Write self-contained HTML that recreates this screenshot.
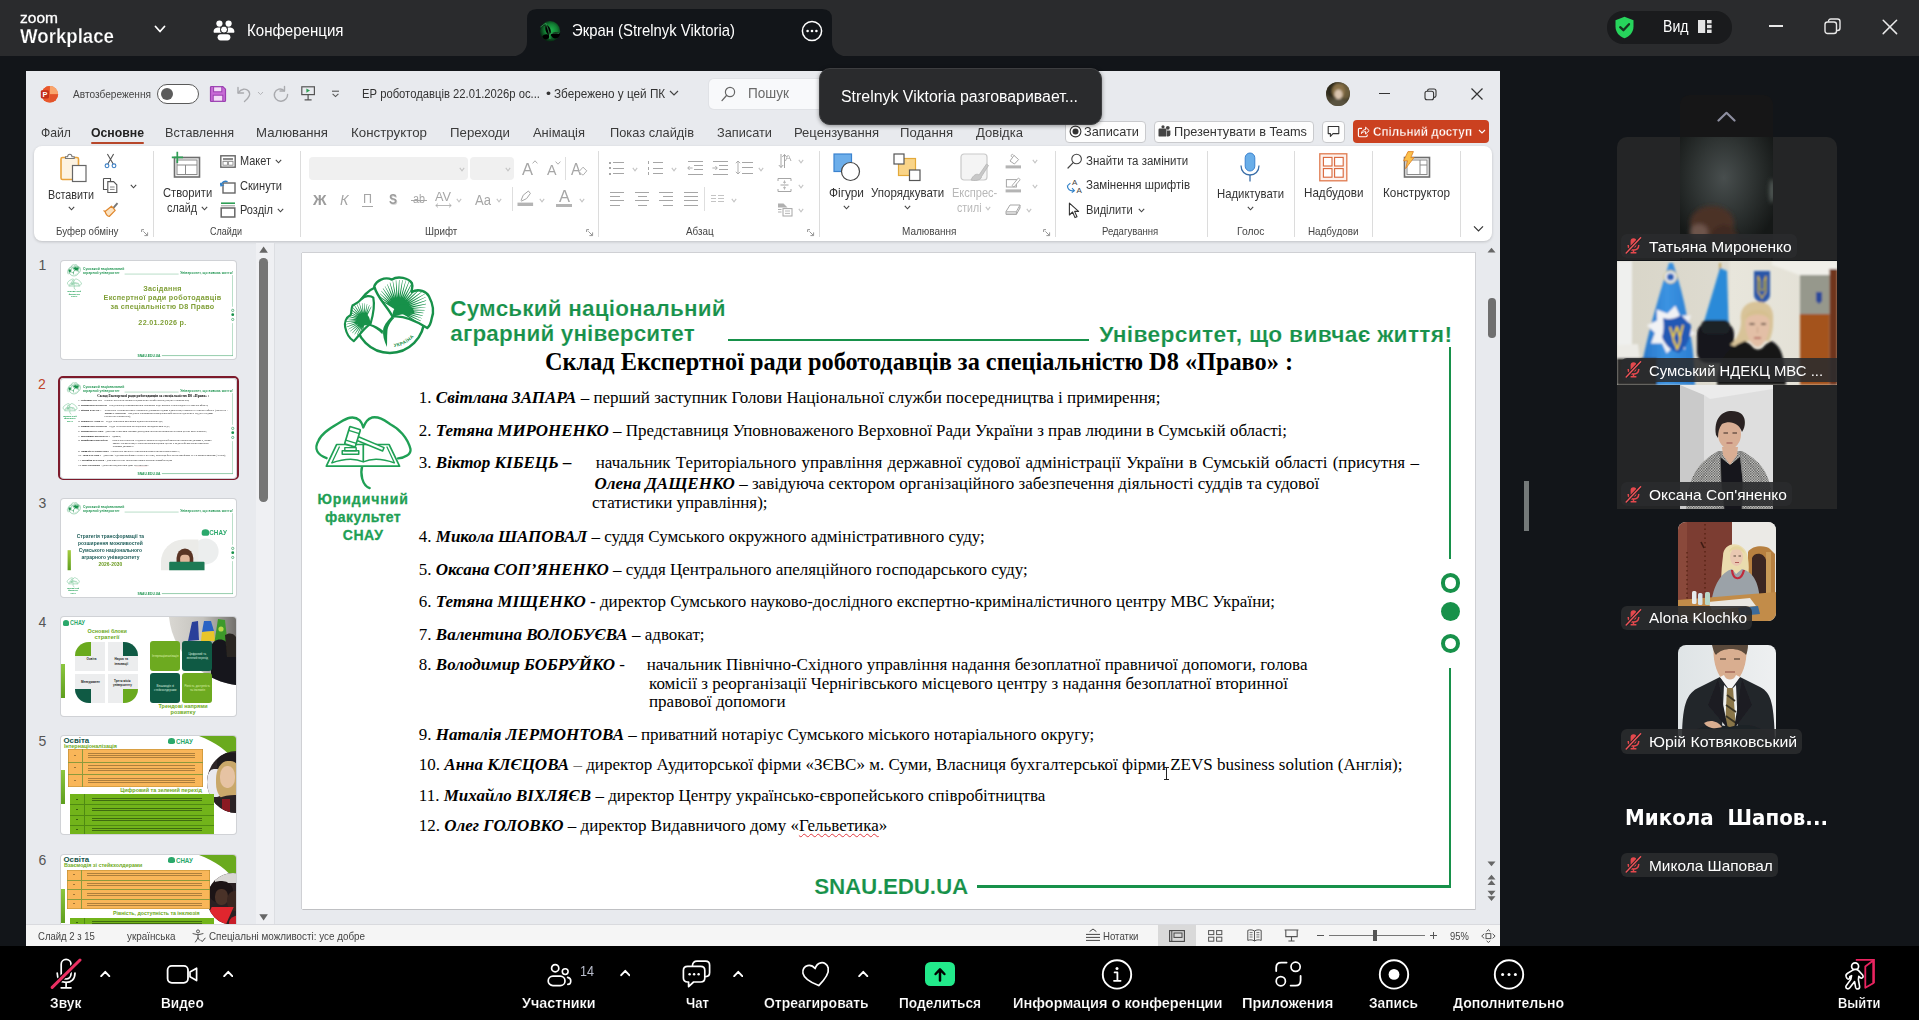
<!DOCTYPE html>
<html lang="uk">
<head>
<meta charset="utf-8">
<title>Zoom Workplace</title>
<style>
*{box-sizing:border-box}
html,body{margin:0;padding:0}
body{width:1919px;height:1020px;background:#121519;position:relative;overflow:hidden;font-family:"Liberation Sans",sans-serif;color:#fff}
.abs{position:absolute}
.t{position:absolute;white-space:pre;line-height:1}
/* slide text */
.row{position:absolute;white-space:pre;font:17px/20px "Liberation Serif",serif;color:#000;height:20px}
.row b{font-weight:bold;font-style:italic}
.g{color:#17914a}
.gh{position:absolute;white-space:pre;font-family:"Liberation Sans",sans-serif;color:#17914a;font-weight:bold;-webkit-text-stroke:0.15px #fff;line-height:1}
</style>
</head>
<body>
<!-- ===== zoom top bar ===== -->
<div class="abs" style="left:0px;top:0px;width:1919px;height:56px;background:#2a2b2d;"></div>
<svg class="abs" style="left:511px;top:0" width="340" height="57" viewBox="0 0 340 57"><path d="M0 57 C10 56 16 50 16 42 V19 Q16 9 26 9 H311 Q321 9 321 19 V42 C321 50 327 56 337 57 Z" fill="#121519"/></svg>
<div class="t" style="left:20.00px;top:8.68px;font:normal normal 14.5px/19px 'Liberation Sans',sans-serif;color:#fff;transform:scaleX(1.0714);transform-origin:0 0;-webkit-text-stroke:.3px #fff">zoom</div>
<div class="t" style="left:20.00px;top:22.54px;font:normal bold 19.8px/26px 'Liberation Sans',sans-serif;color:#fff;transform:scaleX(0.9429);transform-origin:0 0;-webkit-text-stroke:0.25px #2a2b2d">Workplace</div>
<svg class="abs" style="left:154px;top:25px;" width="12" height="9" viewBox="0 0 12 9" fill="none"><path d="M1.5 1.5 L6 6.5 L10.5 1.5" stroke="#fff" stroke-width="1.8" stroke-linecap="round" stroke-linejoin="round"/></svg>
<svg class="abs" style="left:213px;top:19px;" width="22" height="22" viewBox="0 0 22 22" fill="none"><g fill="#fff"><circle cx="6.400" cy="4.600" r="3.100"/><circle cx="15.600" cy="4.600" r="3.100"/><path d="M0.600 12.800 C0.600 9.600 3 8.400 5.600 8.400 C6.400 8.400 7 8.600 7.400 8.800 C6.600 10.400 7 12.600 8.400 13.800 H1.600 C1 13.800 0.600 13.400 0.600 12.800Z"/><path d="M21.400 12.800 C21.400 9.600 19 8.400 16.400 8.400 C15.600 8.400 15 8.600 14.600 8.800 C15.400 10.400 15 12.600 13.600 13.800 H20.400 C21 13.800 21.400 13.400 21.400 12.800Z"/><circle cx="11" cy="10.600" r="3.500" stroke="#2a2b2d" stroke-width="1"/><rect x="4.600" y="15.200" width="12.800" height="6.200" rx="3.100"/></g></svg>
<div class="t" style="left:247.00px;top:20.11px;font:normal normal 17px/22px 'Liberation Sans',sans-serif;color:#fff;transform:scaleX(0.8858);transform-origin:0 0;">Конференция</div>
<svg class="abs" style="left:539px;top:20px" width="22" height="22" viewBox="0 0 22 22"><defs><radialGradient id="tig" cx="55%" cy="45%" r="55%"><stop offset="0" stop-color="#1fb64c"/><stop offset=".55" stop-color="#138034"/><stop offset="1" stop-color="#072812"/></radialGradient><filter id="tib"><feGaussianBlur stdDeviation=".35"/></filter></defs><circle cx="11" cy="11.200" r="10.200" fill="url(#tig)"/><g filter="url(#tib)"><path d="M7 4.600 C12 7 13 12.400 10.400 15.600 C6.400 13.200 5.400 8.400 7 4.600Z" fill="#040604"/><path d="M11.600 14.800 C13.800 11.200 19.200 11.400 21.200 14.200 C19.600 19.600 13.400 20 11.600 14.800Z" fill="#040604"/><path d="M3.400 16.600 C4.800 13.400 9.200 13.600 10.600 16 C9.600 20.200 4.800 20.800 3.400 16.600Z" fill="#040604"/><path d="M1.200 6.800 L6.400 3.600 L5.400 5.800Z" fill="#0a1a0e"/><path d="M6.800 3.200 C8.600 8 10.600 12.600 11 19 M10.600 14.400 C13 13 16 12.600 20 13.400 M1.400 7 L6.600 3.400" stroke="#4be07a" stroke-width=".5" fill="none"/></g></svg>
<div class="t" style="left:572.00px;top:20.11px;font:normal normal 17px/22px 'Liberation Sans',sans-serif;color:#fff;transform:scaleX(0.8739);transform-origin:0 0;">Экран (Strelnyk Viktoria)</div>
<svg class="abs" style="left:801px;top:20px;" width="22" height="22" viewBox="0 0 22 22" fill="none"><circle cx="11" cy="11" r="9.6" stroke="#fff" stroke-width="1.5"/><circle cx="6.6" cy="11" r="1.3" fill="#fff"/><circle cx="11" cy="11" r="1.3" fill="#fff"/><circle cx="15.4" cy="11" r="1.3" fill="#fff"/></svg>
<div class="abs" style="left:1607px;top:11px;width:125px;height:33px;background:#1a1b1d;border-radius:16px"></div>
<svg class="abs" style="left:1614px;top:15.5px;" width="21" height="23" viewBox="0 0 21 23" fill="none"><path d="M10.5 0.8 L19.5 4.2 V10.5 C19.5 16.5 15.6 20.4 10.5 22.2 C5.4 20.4 1.5 16.5 1.5 10.5 V4.2Z" fill="#27d45c"/><path d="M6.2 11.2 L9.4 14.2 L15 8.2" stroke="#15331f" stroke-width="2.3" stroke-linecap="round" stroke-linejoin="round"/></svg>
<div class="t" style="left:1662.50px;top:16.16px;font:normal normal 16px/21px 'Liberation Sans',sans-serif;color:#fff;transform:scaleX(0.8807);transform-origin:0 0;">Вид</div>
<svg class="abs" style="left:1698px;top:20px;" width="14" height="13" viewBox="0 0 14 13" fill="none"><rect x="0" y="0" width="7.2" height="13" fill="#e4e4e4"/><rect x="9" y="0" width="4.6" height="3.4" fill="#e4e4e4"/><rect x="9" y="4.8" width="4.6" height="3.4" fill="#e4e4e4"/><rect x="9" y="9.6" width="4.6" height="3.4" fill="#e4e4e4"/></svg>
<div class="abs" style="left:1769px;top:25px;width:14px;height:1.6px;background:#e8e8e8;"></div>
<svg class="abs" style="left:1824px;top:17.5px;" width="17" height="17" viewBox="0 0 17 17" fill="none"><rect x="1" y="4" width="11.5" height="11.5" rx="2.5" stroke="#e8e8e8" stroke-width="1.4"/><path d="M4.5 3.8 V3.5 Q4.5 1 7 1 H13.5 Q16 1 16 3.5 V10 Q16 12.5 13.5 12.5 H12.8" stroke="#e8e8e8" stroke-width="1.4"/></svg>
<svg class="abs" style="left:1882px;top:18.5px;" width="16" height="16" viewBox="0 0 16 16" fill="none"><path d="M1.2 1.2 L14.6 14.6 M14.6 1.2 L1.2 14.6" stroke="#e8e8e8" stroke-width="1.5" stroke-linecap="round"/></svg>
<!-- ===== powerpoint window ===== -->
<div class="abs" style="left:26px;top:71px;width:1474px;height:875px;background:#e8eaee;"></div>
<svg class="abs" style="left:39.500px;top:85px" width="19" height="19" viewBox="0 0 19 19"><circle cx="9.800" cy="9.300" r="8.300" fill="#f2713a"/><path d="M9.800 1 A8.300 8.300 0 0 1 18.100 9.300 H9.800Z" fill="#f9a56c"/><path d="M9.800 17.600 A8.300 8.300 0 0 0 18.100 9.300 H9.800Z" fill="#e2532a"/><path d="M9.800 17.600 A8.300 8.300 0 0 1 1.500 9.300 A8.300 8.300 0 0 1 9.800 1Z" fill="#e8572c"/><rect x="0.800" y="5.200" width="8.200" height="8.200" rx="1.400" fill="#c42f1a"/><text x="4.900" y="11.900" font-family="Liberation Sans,sans-serif" font-weight="bold" font-size="7.400" fill="#fff" text-anchor="middle">P</text></svg>
<div class="t" style="left:73.00px;top:86.52px;font:normal normal 11.5px/15px 'Liberation Sans',sans-serif;color:#444;transform:scaleX(0.8803);transform-origin:0 0;">Автозбереження</div>
<div class="abs" style="left:157px;top:84px;width:42px;height:20px;background:#fff;border:1px solid #5a5a5a;border-radius:10px"></div>
<div class="abs" style="left:160.8px;top:87.6px;width:12.6px;height:12.6px;background:#5c5c5c;border-radius:50%"></div>
<svg class="abs" style="left:209px;top:85px;" width="18" height="18" viewBox="0 0 18 18" fill="none"><path d="M1.5 2.5 Q1.5 1.5 2.5 1.5 H13.8 L16.5 4.2 V15.5 Q16.5 16.5 15.5 16.5 H2.5 Q1.5 16.5 1.5 15.5Z" fill="#c86bd6" stroke="#9a3fb0" stroke-width="1.2"/><rect x="4.6" y="1.8" width="8.2" height="5" fill="#f3dcf7" stroke="#9a3fb0" stroke-width="1"/><rect x="4.2" y="10.2" width="9.6" height="6" fill="#f3dcf7" stroke="#9a3fb0" stroke-width="1"/></svg>
<svg class="abs" style="left:236px;top:85px;" width="16" height="18" viewBox="0 0 16 18" fill="none"><path d="M2 2.5 V8 H7.5" stroke="#a9aaae" stroke-width="1.4" stroke-linecap="round" stroke-linejoin="round"/><path d="M2.3 7.8 C5 3.5 10 3.2 12.5 6 C15 9 13 13 8.5 16.5" stroke="#a9aaae" stroke-width="1.4" stroke-linecap="round"/></svg>
<svg class="abs" style="left:257px;top:91px;" width="7" height="5" viewBox="0 0 7 5" fill="none"><path d="M1 1 L3.5 3.6 L6 1" stroke="#b5b6ba" stroke-width="1"/></svg>
<svg class="abs" style="left:272px;top:85px;" width="18" height="18" viewBox="0 0 18 18" fill="none"><path d="M12.5 1.5 V6 H8" stroke="#a9aaae" stroke-width="1.4" stroke-linecap="round" stroke-linejoin="round"/><path d="M12.3 5.8 C9 2.5 4 4 2.6 8 C1.3 12.5 5 16.5 9.2 16.2 C13 16 15.6 13 15.6 9.5" stroke="#a9aaae" stroke-width="1.4" stroke-linecap="round"/></svg>
<svg class="abs" style="left:300px;top:85px;" width="17" height="18" viewBox="0 0 17 18" fill="none"><rect x="1.800" y="1.800" width="12.600" height="7.800" stroke="#555" stroke-width="1.200"/><path d="M6.400 3.400 L10 5.600 L6.400 7.800Z" fill="#2f9e55"/><path d="M8.100 9.800 V14.600 M4.600 14.900 H11.600" stroke="#555" stroke-width="1.200"/></svg>
<svg class="abs" style="left:331px;top:90px;" width="9" height="8" viewBox="0 0 9 8" fill="none"><path d="M1 1.2 H8" stroke="#555" stroke-width="1.1"/><path d="M1.6 3.8 L4.5 6.6 L7.4 3.8" stroke="#555" stroke-width="1.1"/></svg>
<div class="t" style="left:362.00px;top:85.67px;font:normal normal 12.5px/16px 'Liberation Sans',sans-serif;color:#333;transform:scaleX(0.9003);transform-origin:0 0;">ЕР роботодавців 22.01.2026р ос...</div>
<div class="t" style="left:546.00px;top:85.67px;font:normal normal 12.5px/16px 'Liberation Sans',sans-serif;color:#333;transform:scaleX(1.1388);transform-origin:0 0;">•</div>
<div class="t" style="left:553.80px;top:85.67px;font:normal normal 12.5px/16px 'Liberation Sans',sans-serif;color:#333;transform:scaleX(0.9396);transform-origin:0 0;">Збережено у цей ПК</div>
<svg class="abs" style="left:669px;top:90px;" width="10" height="7" viewBox="0 0 10 7" fill="none"><path d="M1 1 L5 5 L9 1" stroke="#444" stroke-width="1.2"/></svg>
<div class="abs" style="left:709px;top:79px;width:380px;height:30px;background:#f8f9fb;border-radius:5px;box-shadow:0 0 0 1px #e0e2e6"></div>
<svg class="abs" style="left:721px;top:86px;" width="15" height="16" viewBox="0 0 15 16" fill="none"><circle cx="9" cy="6" r="4.6" stroke="#666" stroke-width="1.2"/><path d="M5.7 9.3 L1 14.6" stroke="#666" stroke-width="1.3" stroke-linecap="round"/></svg>
<div class="t" style="left:748.00px;top:84.15px;font:normal normal 14px/18px 'Liberation Sans',sans-serif;color:#6a6a6a;transform:scaleX(0.9711);transform-origin:0 0;">Пошук</div>
<svg class="abs" style="left:1326px;top:82px" width="24" height="24" viewBox="0 0 24 24"><defs><clipPath id="av"><circle cx="12" cy="12" r="12"/></clipPath><filter id="avb"><feGaussianBlur stdDeviation=".9"/></filter></defs><g clip-path="url(#av)"><rect width="24" height="24" fill="#4a4330"/><g filter="url(#avb)"><ellipse cx="6" cy="7" rx="7" ry="8" fill="#2e2a1c"/><ellipse cx="19" cy="8" rx="6" ry="9" fill="#6a5c3a"/><ellipse cx="12.500" cy="9" rx="6.500" ry="7.500" fill="#8a7248"/><ellipse cx="12.500" cy="12.500" rx="4" ry="5" fill="#d9c4ae"/><ellipse cx="12" cy="22" rx="9" ry="5" fill="#5a5240"/></g></g></svg>
<div class="abs" style="left:1379px;top:93px;width:11px;height:1.2px;background:#333;"></div>
<svg class="abs" style="left:1424px;top:88px;" width="13" height="13" viewBox="0 0 13 13" fill="none"><rect x="1" y="3.2" width="8.6" height="8.6" rx="2" stroke="#333" stroke-width="1.1"/><path d="M3.6 3 V2.8 Q3.6 1 5.4 1 H10 Q12 1 12 3 V7.6 Q12 9.4 10.2 9.4 H9.8" stroke="#333" stroke-width="1.1"/></svg>
<svg class="abs" style="left:1470px;top:87px;" width="14" height="14" viewBox="0 0 14 14" fill="none"><path d="M1.5 1.5 L12.5 12.5 M12.5 1.5 L1.5 12.5" stroke="#333" stroke-width="1.2"/></svg>
<div class="t" style="left:41.00px;top:123.92px;font:normal normal 13.5px/18px 'Liberation Sans',sans-serif;color:#3b3b3b;transform:scaleX(0.9035);transform-origin:0 0;">Файл</div>
<div class="t" style="left:165.00px;top:123.92px;font:normal normal 13.5px/18px 'Liberation Sans',sans-serif;color:#3b3b3b;transform:scaleX(0.9354);transform-origin:0 0;">Вставлення</div>
<div class="t" style="left:256.00px;top:123.92px;font:normal normal 13.5px/18px 'Liberation Sans',sans-serif;color:#3b3b3b;transform:scaleX(0.9773);transform-origin:0 0;">Малювання</div>
<div class="t" style="left:351.00px;top:123.92px;font:normal normal 13.5px/18px 'Liberation Sans',sans-serif;color:#3b3b3b;transform:scaleX(0.9872);transform-origin:0 0;">Конструктор</div>
<div class="t" style="left:450.00px;top:123.92px;font:normal normal 13.5px/18px 'Liberation Sans',sans-serif;color:#3b3b3b;transform:scaleX(0.9808);transform-origin:0 0;">Переходи</div>
<div class="t" style="left:533.00px;top:123.92px;font:normal normal 13.5px/18px 'Liberation Sans',sans-serif;color:#3b3b3b;transform:scaleX(0.9577);transform-origin:0 0;">Анімація</div>
<div class="t" style="left:610.00px;top:123.92px;font:normal normal 13.5px/18px 'Liberation Sans',sans-serif;color:#3b3b3b;transform:scaleX(0.9498);transform-origin:0 0;">Показ слайдів</div>
<div class="t" style="left:717.00px;top:123.92px;font:normal normal 13.5px/18px 'Liberation Sans',sans-serif;color:#3b3b3b;transform:scaleX(0.9450);transform-origin:0 0;">Записати</div>
<div class="t" style="left:794.00px;top:123.92px;font:normal normal 13.5px/18px 'Liberation Sans',sans-serif;color:#3b3b3b;transform:scaleX(0.9657);transform-origin:0 0;">Рецензування</div>
<div class="t" style="left:900.00px;top:123.92px;font:normal normal 13.5px/18px 'Liberation Sans',sans-serif;color:#3b3b3b;transform:scaleX(0.9719);transform-origin:0 0;">Подання</div>
<div class="t" style="left:976.00px;top:123.92px;font:normal normal 13.5px/18px 'Liberation Sans',sans-serif;color:#3b3b3b;transform:scaleX(0.9678);transform-origin:0 0;">Довідка</div>
<div class="t" style="left:91.00px;top:123.92px;font:normal bold 13.5px/18px 'Liberation Sans',sans-serif;color:#222;transform:scaleX(0.9079);transform-origin:0 0;">Основне</div>
<div class="abs" style="left:91px;top:141.5px;width:53px;height:2.6px;background:#b7472a;border-radius:1.3px"></div>
<div class="abs" style="left:1064.5px;top:120.5px;width:81px;height:22px;background:#fdfdfd;border:1px solid #c9cacd;border-radius:4px"></div>
<svg class="abs" style="left:1069px;top:125px;" width="13" height="13" viewBox="0 0 13 13" fill="none"><circle cx="6.5" cy="6.5" r="5.4" stroke="#333" stroke-width="1.1"/><circle cx="6.5" cy="6.5" r="3" fill="#333"/></svg>
<div class="t" style="left:1084.00px;top:122.82px;font:normal normal 13.5px/18px 'Liberation Sans',sans-serif;color:#333;transform:scaleX(0.9450);transform-origin:0 0;">Записати</div>
<div class="abs" style="left:1154px;top:120.5px;width:159.5px;height:22px;background:#fdfdfd;border:1px solid #c9cacd;border-radius:4px"></div>
<svg class="abs" style="left:1158px;top:125px;" width="13" height="13" viewBox="0 0 13 13" fill="none"><rect x="0.5" y="3.6" width="8" height="8" rx="1.2" fill="#444"/><circle cx="9.8" cy="2.8" r="1.9" fill="#444"/><path d="M9 5.6 H12.4 V9.6 Q12.4 11.6 10 11.6 H9Z" fill="#444"/><circle cx="5" cy="1.8" r="1.6" fill="#444"/></svg>
<div class="t" style="left:1174.00px;top:122.82px;font:normal normal 13.5px/18px 'Liberation Sans',sans-serif;color:#333;transform:scaleX(0.9439);transform-origin:0 0;">Презентувати в Teams</div>
<div class="abs" style="left:1322px;top:120.5px;width:23px;height:22px;background:#fdfdfd;border:1px solid #c9cacd;border-radius:4px"></div>
<svg class="abs" style="left:1327px;top:125px;" width="13" height="13" viewBox="0 0 13 13" fill="none"><path d="M1.2 1.5 H11.8 V8.6 H6 L3.4 11.4 V8.6 H1.2Z" stroke="#333" stroke-width="1.1" stroke-linejoin="round"/></svg>
<div class="abs" style="left:1353px;top:120px;width:135.5px;height:23px;background:#cb4120;border-radius:4px"></div>
<svg class="abs" style="left:1357px;top:125px;" width="13" height="13" viewBox="0 0 13 13" fill="none"><path d="M5 3.4 H2.6 Q1.4 3.4 1.4 4.6 V10.6 Q1.4 11.8 2.6 11.8 H9 Q10.2 11.8 10.2 10.6 V9.4" stroke="#fff" stroke-width="1.1"/><path d="M4.4 8.6 C4.6 6 6.4 4.6 8.6 4.6 V2.2 L12.2 5.6 L8.6 9 V6.6 C7 6.6 5.6 7 4.4 8.6Z" stroke="#fff" stroke-width="1" stroke-linejoin="round"/></svg>
<div class="t" style="left:1373.00px;top:123.32px;font:normal bold 13.5px/18px 'Liberation Sans',sans-serif;color:#fff;transform:scaleX(0.8700);transform-origin:0 0;-webkit-text-stroke:.3px #cb4120">Спільний доступ</div>
<svg class="abs" style="left:1478px;top:129px;" width="8" height="6" viewBox="0 0 8 6" fill="none"><path d="M1 1 L4 4 L7 1" stroke="#fff" stroke-width="1.1"/></svg>
<div class="abs" style="left:34px;top:146px;width:1458px;height:95px;background:#fff;border-radius:8px;box-shadow:0 1px 3px rgba(0,0,0,.18)"></div>
<div class="abs" style="left:152.5px;top:151px;width:1px;height:86px;background:#dcdcdc;"></div>
<div class="abs" style="left:300px;top:151px;width:1px;height:86px;background:#dcdcdc;"></div>
<div class="abs" style="left:597.6px;top:151px;width:1px;height:86px;background:#dcdcdc;"></div>
<div class="abs" style="left:818.8px;top:151px;width:1px;height:86px;background:#dcdcdc;"></div>
<div class="abs" style="left:1055px;top:151px;width:1px;height:86px;background:#dcdcdc;"></div>
<div class="abs" style="left:1207.2px;top:151px;width:1px;height:86px;background:#dcdcdc;"></div>
<div class="abs" style="left:1293.8px;top:151px;width:1px;height:86px;background:#dcdcdc;"></div>
<div class="abs" style="left:1372px;top:151px;width:1px;height:86px;background:#dcdcdc;"></div>
<div class="abs" style="left:1459.7px;top:151px;width:1px;height:86px;background:#dcdcdc;"></div>
<svg class="abs" style="left:59px;top:153px;" width="30" height="30" viewBox="0 0 30 30" fill="none"><rect x="2" y="4.5" width="17.5" height="22" rx="1.5" stroke="#e8a33d" stroke-width="1.6" fill="#fdf3e1"/><path d="M6.5 5.5 V3.8 H8.6 Q8.8 1.2 10.8 1.2 Q12.8 1.2 13 3.8 H15.2 V5.5Z" fill="#fff" stroke="#777" stroke-width="1.1"/><rect x="13.5" y="12.5" width="13.5" height="16" fill="#fff" stroke="#666" stroke-width="1.2"/></svg>
<div class="t" style="left:48.00px;top:185.60px;font:normal normal 13px/17px 'Liberation Sans',sans-serif;color:#333;transform:scaleX(0.8274);transform-origin:0 0;">Вставити</div>
<svg class="abs" style="left:67.5px;top:206px;" width="7" height="5" viewBox="0 0 7 5" fill="none"><path d="M0.8 0.8 L3.5 3.8 L6.2 0.8" stroke="#444" stroke-width="1.1"/></svg>
<svg class="abs" style="left:104px;top:153px;" width="13" height="16" viewBox="0 0 13 16" fill="none"><path d="M3.4 1 L9.2 11 M9.6 1 L3.8 11" stroke="#555" stroke-width="1.1"/><circle cx="3" cy="12.8" r="1.9" stroke="#3b7fc4" stroke-width="1.1"/><circle cx="10" cy="12.8" r="1.9" stroke="#3b7fc4" stroke-width="1.1"/></svg>
<svg class="abs" style="left:102px;top:177px;" width="17" height="17" viewBox="0 0 17 17" fill="none"><path d="M1.5 1.5 H8.5 V4.5 M1.5 1.5 V12.5 H5.5" stroke="#555" stroke-width="1.1"/><path d="M5.8 4.6 H11.6 L14.8 7.8 V15.5 H5.8Z" stroke="#555" stroke-width="1.1" fill="#fff"/><path d="M8 10 H12.6 M8 12.4 H12.6" stroke="#777" stroke-width="0.9"/></svg>
<svg class="abs" style="left:129.5px;top:184px;" width="7" height="5" viewBox="0 0 7 5" fill="none"><path d="M0.8 0.8 L3.5 3.8 L6.2 0.8" stroke="#444" stroke-width="1.1"/></svg>
<svg class="abs" style="left:102px;top:201px;" width="17" height="17" viewBox="0 0 17 17" fill="none"><path d="M10.5 6.5 L14.8 1.6 L16.2 2.8 L12 7.8Z" fill="#777"/><path d="M3 10.5 L9.5 5.2 L13.2 9.4 L7.2 15.5 Q4.5 15 3 10.5Z" fill="#fbe3c2" stroke="#e0872d" stroke-width="1.2" stroke-linejoin="round"/><path d="M1.5 9.6 L3 10.5" stroke="#e0872d" stroke-width="1.2"/></svg>
<div class="t" style="left:55.50px;top:223.89px;font:normal normal 11px/14px 'Liberation Sans',sans-serif;color:#444;transform:scaleX(0.8871);transform-origin:0 0;">Буфер обміну</div>
<svg class="abs" style="left:141px;top:229px;" width="8" height="8" viewBox="0 0 8 8" fill="none"><path d="M0.6 3 V0.6 H3 M2.4 2.4 L6.2 6.2 M6.6 3.4 V6.6 H3.4" stroke="#8a8a8a" stroke-width="0.9"/></svg>
<svg class="abs" style="left:171px;top:151px;" width="32" height="29" viewBox="0 0 32 29" fill="none"><rect x="3.5" y="6.5" width="25" height="19.5" stroke="#6e6e6e" stroke-width="1.6" fill="#f4f4f4"/><rect x="6" y="9" width="20" height="14.5" stroke="#8a8a8a" stroke-width="1" fill="#fff"/><path d="M6 14 H26 M14.5 14 V23.5" stroke="#8a8a8a" stroke-width="1"/><path d="M6.3 0.8 V12 M0.8 6.4 H12" stroke="#2f9e55" stroke-width="1.7"/></svg>
<div class="t" style="left:162.80px;top:184.00px;font:normal normal 13px/17px 'Liberation Sans',sans-serif;color:#333;transform:scaleX(0.8624);transform-origin:0 0;">Створити</div>
<div class="t" style="left:166.70px;top:198.80px;font:normal normal 13px/17px 'Liberation Sans',sans-serif;color:#333;transform:scaleX(0.8294);transform-origin:0 0;">слайд</div>
<svg class="abs" style="left:200.5px;top:205.5px;" width="7" height="5" viewBox="0 0 7 5" fill="none"><path d="M0.8 0.8 L3.5 3.8 L6.2 0.8" stroke="#444" stroke-width="1.1"/></svg>
<svg class="abs" style="left:220px;top:155px;" width="16" height="13" viewBox="0 0 16 13" fill="none"><rect x="0.8" y="0.8" width="14.4" height="11.4" stroke="#666" stroke-width="1.4" fill="#fff"/><rect x="3" y="3" width="10" height="2.2" fill="#8a8a8a"/><rect x="3" y="6.4" width="4.4" height="3.8" stroke="#8a8a8a" stroke-width="0.9"/><rect x="8.6" y="6.4" width="4.4" height="3.8" stroke="#8a8a8a" stroke-width="0.9"/></svg>
<div class="t" style="left:240.00px;top:152.00px;font:normal normal 13px/17px 'Liberation Sans',sans-serif;color:#333;transform:scaleX(0.8425);transform-origin:0 0;">Макет</div>
<svg class="abs" style="left:274.5px;top:158.5px;" width="7" height="5" viewBox="0 0 7 5" fill="none"><path d="M0.8 0.8 L3.5 3.8 L6.2 0.8" stroke="#444" stroke-width="1.1"/></svg>
<svg class="abs" style="left:220px;top:178.5px;" width="16" height="15" viewBox="0 0 16 15" fill="none"><rect x="3" y="4" width="12" height="10" stroke="#666" stroke-width="1.4" fill="#fff"/><path d="M1 6.5 C1.5 3 4.5 1.6 7.6 2.6" stroke="#2d7fc8" stroke-width="1.3"/><path d="M0.2 3.8 L1 7 L4 5.8" stroke="#2d7fc8" stroke-width="1.1" fill="none"/></svg>
<div class="t" style="left:240.00px;top:177.00px;font:normal normal 13px/17px 'Liberation Sans',sans-serif;color:#333;transform:scaleX(0.8531);transform-origin:0 0;">Скинути</div>
<svg class="abs" style="left:220px;top:202px;" width="16" height="16" viewBox="0 0 16 16" fill="none"><path d="M1 1.2 H15" stroke="#2f9e55" stroke-width="1.6"/><path d="M1 3.8 H15" stroke="#9a9a9a" stroke-width="1"/><rect x="1.2" y="6" width="13.6" height="9" stroke="#666" stroke-width="1.5" fill="#fff"/></svg>
<div class="t" style="left:240.00px;top:201.40px;font:normal normal 13px/17px 'Liberation Sans',sans-serif;color:#333;transform:scaleX(0.8479);transform-origin:0 0;">Розділ</div>
<svg class="abs" style="left:276.5px;top:208px;" width="7" height="5" viewBox="0 0 7 5" fill="none"><path d="M0.8 0.8 L3.5 3.8 L6.2 0.8" stroke="#444" stroke-width="1.1"/></svg>
<div class="t" style="left:210.00px;top:223.89px;font:normal normal 11px/14px 'Liberation Sans',sans-serif;color:#444;transform:scaleX(0.8166);transform-origin:0 0;">Слайди</div>
<div class="abs" style="left:308.5px;top:157px;width:159px;height:22.6px;background:#f0f0f0;border-radius:4px"></div>
<div class="abs" style="left:470.4px;top:157px;width:43.4px;height:22.6px;background:#f0f0f0;border-radius:4px"></div>
<svg class="abs" style="left:458.5px;top:166.5px;" width="6" height="5" viewBox="0 0 6 5" fill="none"><path d="M0.8 0.8 L3 3.8 L5.2 0.8" stroke="#c4c4c4" stroke-width="1.1"/></svg>
<svg class="abs" style="left:505px;top:166.5px;" width="6" height="5" viewBox="0 0 6 5" fill="none"><path d="M0.8 0.8 L3 3.8 L5.2 0.8" stroke="#c4c4c4" stroke-width="1.1"/></svg>
<div class="t" style="left:521.50px;top:159.11px;font:normal normal 17px/22px 'Liberation Sans',sans-serif;color:#a6a6a6;transform:scaleX(0.9697);transform-origin:0 0;">A</div>
<svg class="abs" style="left:531.5px;top:160px;" width="6" height="4" viewBox="0 0 6 4" fill="none"><path d="M0.6 3.4 L3 0.8 L5.4 3.4" stroke="#a6a6a6" stroke-width="0.9"/></svg>
<div class="t" style="left:546.50px;top:161.48px;font:normal normal 14.5px/19px 'Liberation Sans',sans-serif;color:#a6a6a6;transform:scaleX(0.9822);transform-origin:0 0;">A</div>
<svg class="abs" style="left:555px;top:160.5px;" width="6" height="4" viewBox="0 0 6 4" fill="none"><path d="M0.6 0.6 L3 3.2 L5.4 0.6" stroke="#a6a6a6" stroke-width="0.9"/></svg>
<div class="abs" style="left:565px;top:157px;width:1px;height:23px;background:#dedede;"></div>
<div class="t" style="left:571.00px;top:158.96px;font:normal normal 16px/21px 'Liberation Sans',sans-serif;color:#a6a6a6;transform:scaleX(0.9370);transform-origin:0 0;">A</div>
<svg class="abs" style="left:578px;top:166px;" width="10" height="10" viewBox="0 0 10 10" fill="none"><path d="M4.2 8.8 L1 5.6 L5 1.2 L8.8 4.8 L5.4 8.8Z" stroke="#a6a6a6" stroke-width="0.9" fill="#fff"/></svg>
<div class="t" style="left:313.00px;top:190.65px;font:normal bold 14px/18px 'Liberation Sans',sans-serif;color:#9c9c9c;transform:scaleX(1.0667);transform-origin:0 0;">Ж</div>
<div class="t" style="left:340.00px;top:190.65px;font:italic normal 14px/18px 'Liberation Sans',sans-serif;color:#a6a6a6;transform:scaleX(1.0284);transform-origin:0 0;">К</div>
<div class="t" style="left:362.50px;top:189.82px;font:normal normal 13.5px/18px 'Liberation Sans',sans-serif;color:#a6a6a6;transform:scaleX(0.9275);transform-origin:0 0;">П</div>
<div class="abs" style="left:362px;top:205.5px;width:10.5px;height:1px;background:#a6a6a6;"></div>
<div class="t" style="left:389.00px;top:189.98px;font:normal bold 14.5px/19px 'Liberation Sans',sans-serif;color:#9c9c9c;transform:scaleX(0.8271);transform-origin:0 0;text-shadow:1px 1px 0 #d8d8d8">S</div>
<div class="t" style="left:413.00px;top:191.17px;font:normal normal 12.5px/16px 'Liberation Sans',sans-serif;color:#a6a6a6;transform:scaleX(0.8629);transform-origin:0 0;">ab</div>
<div class="abs" style="left:410.5px;top:199.6px;width:16.5px;height:1px;background:#a6a6a6;"></div>
<div class="t" style="left:435.00px;top:188.67px;font:normal normal 12.5px/16px 'Liberation Sans',sans-serif;color:#a6a6a6;transform:scaleX(1.0159);transform-origin:0 0;">AV</div>
<svg class="abs" style="left:435px;top:202.5px;" width="17" height="5" viewBox="0 0 17 5" fill="none"><path d="M0.8 2.5 H16.2 M3 0.6 L0.8 2.5 L3 4.4 M14 0.6 L16.2 2.5 L14 4.4" stroke="#a6a6a6" stroke-width="0.8"/></svg>
<svg class="abs" style="left:456px;top:197.5px;" width="6" height="5" viewBox="0 0 6 5" fill="none"><path d="M0.8 0.8 L3 3.8 L5.2 0.8" stroke="#c4c4c4" stroke-width="1.1"/></svg>
<div class="t" style="left:475.00px;top:190.65px;font:normal normal 14px/18px 'Liberation Sans',sans-serif;color:#a6a6a6;transform:scaleX(0.9343);transform-origin:0 0;">Aa</div>
<svg class="abs" style="left:496px;top:197.5px;" width="6" height="5" viewBox="0 0 6 5" fill="none"><path d="M0.8 0.8 L3 3.8 L5.2 0.8" stroke="#c4c4c4" stroke-width="1.1"/></svg>
<div class="abs" style="left:511.6px;top:187px;width:1px;height:24px;background:#dedede;"></div>
<svg class="abs" style="left:517px;top:190px;" width="17" height="17" viewBox="0 0 17 17" fill="none"><path d="M4 10.5 L6.2 5.2 L11.4 1 L13.4 3.4 L9.6 8.6 L4.6 11Z" stroke="#a6a6a6" stroke-width="1" fill="#fff"/><rect x="0.5" y="12.6" width="15.6" height="3.4" fill="#b4b4b4"/></svg>
<svg class="abs" style="left:539px;top:197.5px;" width="6" height="5" viewBox="0 0 6 5" fill="none"><path d="M0.8 0.8 L3 3.8 L5.2 0.8" stroke="#c4c4c4" stroke-width="1.1"/></svg>
<div class="t" style="left:558.50px;top:186.46px;font:normal normal 16px/21px 'Liberation Sans',sans-serif;color:#a6a6a6;transform:scaleX(1.0307);transform-origin:0 0;">A</div>
<div class="abs" style="left:556px;top:203.6px;width:16px;height:3.2px;background:#b4b4b4;"></div>
<svg class="abs" style="left:579px;top:197.5px;" width="6" height="5" viewBox="0 0 6 5" fill="none"><path d="M0.8 0.8 L3 3.8 L5.2 0.8" stroke="#c4c4c4" stroke-width="1.1"/></svg>
<div class="t" style="left:424.70px;top:223.89px;font:normal normal 11px/14px 'Liberation Sans',sans-serif;color:#444;transform:scaleX(0.8922);transform-origin:0 0;">Шрифт</div>
<svg class="abs" style="left:586px;top:229px;" width="8" height="8" viewBox="0 0 8 8" fill="none"><path d="M0.6 3 V0.6 H3 M2.4 2.4 L6.2 6.2 M6.6 3.4 V6.6 H3.4" stroke="#8a8a8a" stroke-width="0.9"/></svg>
<div class="abs" style="left:609px;top:161.5px;width:2.2px;height:2.2px;background:#a6a6a6;"></div>
<div class="abs" style="left:613.4px;top:162px;width:10.6px;height:1.1px;background:#a6a6a6;"></div>
<div class="abs" style="left:609px;top:167.1px;width:2.2px;height:2.2px;background:#a6a6a6;"></div>
<div class="abs" style="left:613.4px;top:167.6px;width:10.6px;height:1.1px;background:#a6a6a6;"></div>
<div class="abs" style="left:609px;top:172.7px;width:2.2px;height:2.2px;background:#a6a6a6;"></div>
<div class="abs" style="left:613.4px;top:173.2px;width:10.6px;height:1.1px;background:#a6a6a6;"></div>
<svg class="abs" style="left:631.5px;top:166.5px;" width="6" height="5" viewBox="0 0 6 5" fill="none"><path d="M0.8 0.8 L3 3.8 L5.2 0.8" stroke="#c4c4c4" stroke-width="1.1"/></svg>
<div class="abs" style="left:652.5px;top:162px;width:10.6px;height:1.1px;background:#a6a6a6;"></div>
<div class="abs" style="left:648px;top:161px;width:1px;height:3px;background:#a6a6a6;"></div>
<div class="abs" style="left:652.5px;top:167.6px;width:10.6px;height:1.1px;background:#a6a6a6;"></div>
<div class="abs" style="left:648px;top:166.6px;width:1px;height:3px;background:#a6a6a6;"></div>
<div class="abs" style="left:652.5px;top:173.2px;width:10.6px;height:1.1px;background:#a6a6a6;"></div>
<div class="abs" style="left:648px;top:172.2px;width:1px;height:3px;background:#a6a6a6;"></div>
<svg class="abs" style="left:671px;top:166.5px;" width="6" height="5" viewBox="0 0 6 5" fill="none"><path d="M0.8 0.8 L3 3.8 L5.2 0.8" stroke="#c4c4c4" stroke-width="1.1"/></svg>
<div class="abs" style="left:688px;top:161px;width:14.5px;height:1.1px;background:#a6a6a6;"></div>
<div class="abs" style="left:694px;top:165.2px;width:8.5px;height:1.1px;background:#a6a6a6;"></div>
<div class="abs" style="left:694px;top:169.4px;width:8.5px;height:1.1px;background:#a6a6a6;"></div>
<div class="abs" style="left:688px;top:173.6px;width:14.5px;height:1.1px;background:#a6a6a6;"></div>
<svg class="abs" style="left:687px;top:164.5px;" width="6" height="6" viewBox="0 0 6 6" fill="none"><path d="M5.6 3 H0.8 M2.6 1 L0.8 3 L2.6 5" stroke="#a6a6a6" stroke-width="0.9"/></svg>
<div class="abs" style="left:713px;top:161px;width:14.5px;height:1.1px;background:#a6a6a6;"></div>
<div class="abs" style="left:719px;top:165.2px;width:8.5px;height:1.1px;background:#a6a6a6;"></div>
<div class="abs" style="left:719px;top:169.4px;width:8.5px;height:1.1px;background:#a6a6a6;"></div>
<div class="abs" style="left:713px;top:173.6px;width:14.5px;height:1.1px;background:#a6a6a6;"></div>
<svg class="abs" style="left:712px;top:164.5px;" width="6" height="6" viewBox="0 0 6 6" fill="none"><path d="M0.4 3 H5.2 M3.4 1 L5.2 3 L3.4 5" stroke="#a6a6a6" stroke-width="0.9"/></svg>
<div class="abs" style="left:742px;top:161.5px;width:10.5px;height:1.1px;background:#a6a6a6;"></div>
<div class="abs" style="left:742px;top:167px;width:10.5px;height:1.1px;background:#a6a6a6;"></div>
<div class="abs" style="left:742px;top:172.5px;width:10.5px;height:1.1px;background:#a6a6a6;"></div>
<svg class="abs" style="left:735px;top:160px;" width="6" height="15" viewBox="0 0 6 15" fill="none"><path d="M3 1 V14 M0.8 3.2 L3 1 L5.2 3.2 M0.8 11.8 L3 14 L5.2 11.8" stroke="#a6a6a6" stroke-width="0.9"/></svg>
<svg class="abs" style="left:758px;top:166.5px;" width="6" height="5" viewBox="0 0 6 5" fill="none"><path d="M0.8 0.8 L3 3.8 L5.2 0.8" stroke="#c4c4c4" stroke-width="1.1"/></svg>
<svg class="abs" style="left:778px;top:153px;" width="14" height="16" viewBox="0 0 14 16" fill="none"><path d="M3 1 V14.5 M0.8 12 L3 14.5 L5.2 12" stroke="#a6a6a6" stroke-width="1"/><path d="M11 15 V1.5 M8.8 4 L11 1.5 L13.2 4" stroke="#a6a6a6" stroke-width="1" transform="translate(-4.5 0)"/></svg>
<div class="t" style="left:785.00px;top:151.71px;font:normal normal 9.5px/12px 'Liberation Sans',sans-serif;color:#a6a6a6;transform:scaleX(1.0246);transform-origin:0 0;">A</div>
<svg class="abs" style="left:798px;top:158.5px;" width="6" height="5" viewBox="0 0 6 5" fill="none"><path d="M0.8 0.8 L3 3.8 L5.2 0.8" stroke="#c4c4c4" stroke-width="1.1"/></svg>
<svg class="abs" style="left:777px;top:177px;" width="15" height="16" viewBox="0 0 15 16" fill="none"><path d="M1 4 V1.5 H14 V4 M1 12 V14.5 H14 V12" stroke="#a6a6a6" stroke-width="1"/><path d="M3.5 8 H11.5" stroke="#a6a6a6" stroke-width="1"/><path d="M7.5 3.4 V6 M6 4.8 L7.5 6.2 L9 4.8 M7.5 12.6 V10 M6 11.2 L7.5 9.8 L9 11.2" stroke="#a6a6a6" stroke-width="0.8"/></svg>
<svg class="abs" style="left:798px;top:183.5px;" width="6" height="5" viewBox="0 0 6 5" fill="none"><path d="M0.8 0.8 L3 3.8 L5.2 0.8" stroke="#c4c4c4" stroke-width="1.1"/></svg>
<svg class="abs" style="left:777px;top:202px;" width="16" height="15" viewBox="0 0 16 15" fill="none"><path d="M1 1.5 H6.5 L10.5 5.5 H1Z" fill="#b0b0b0"/><rect x="6" y="6.6" width="9" height="7.4" stroke="#a6a6a6" stroke-width="1" fill="#fff"/><path d="M8 9 H13 M8 11.4 H13" stroke="#a6a6a6" stroke-width="0.8"/><path d="M1 7.5 H4.5 M1 10 H4.5" stroke="#a6a6a6" stroke-width="0.9"/></svg>
<svg class="abs" style="left:798px;top:208px;" width="6" height="5" viewBox="0 0 6 5" fill="none"><path d="M0.8 0.8 L3 3.8 L5.2 0.8" stroke="#c4c4c4" stroke-width="1.1"/></svg>
<div class="abs" style="left:610px;top:192px;width:14px;height:1.1px;background:#a6a6a6;"></div>
<div class="abs" style="left:610px;top:196.2px;width:10px;height:1.1px;background:#a6a6a6;"></div>
<div class="abs" style="left:610px;top:200.4px;width:14px;height:1.1px;background:#a6a6a6;"></div>
<div class="abs" style="left:610px;top:204.6px;width:10px;height:1.1px;background:#a6a6a6;"></div>
<div class="abs" style="left:635px;top:192px;width:14px;height:1.1px;background:#a6a6a6;"></div>
<div class="abs" style="left:637.5px;top:196.2px;width:9px;height:1.1px;background:#a6a6a6;"></div>
<div class="abs" style="left:635px;top:200.4px;width:14px;height:1.1px;background:#a6a6a6;"></div>
<div class="abs" style="left:637.5px;top:204.6px;width:9px;height:1.1px;background:#a6a6a6;"></div>
<div class="abs" style="left:659px;top:192px;width:14px;height:1.1px;background:#a6a6a6;"></div>
<div class="abs" style="left:663px;top:196.2px;width:10px;height:1.1px;background:#a6a6a6;"></div>
<div class="abs" style="left:659px;top:200.4px;width:14px;height:1.1px;background:#a6a6a6;"></div>
<div class="abs" style="left:663px;top:204.6px;width:10px;height:1.1px;background:#a6a6a6;"></div>
<div class="abs" style="left:684px;top:192px;width:14px;height:1.1px;background:#a6a6a6;"></div>
<div class="abs" style="left:684px;top:196.2px;width:14px;height:1.1px;background:#a6a6a6;"></div>
<div class="abs" style="left:684px;top:200.4px;width:14px;height:1.1px;background:#a6a6a6;"></div>
<div class="abs" style="left:684px;top:204.6px;width:14px;height:1.1px;background:#a6a6a6;"></div>
<div class="abs" style="left:704px;top:187px;width:1px;height:24px;background:#dedede;"></div>
<div class="abs" style="left:711px;top:195px;width:5.4px;height:1.1px;background:#c4c4c4;"></div>
<div class="abs" style="left:711px;top:198.2px;width:5.4px;height:1.1px;background:#c4c4c4;"></div>
<div class="abs" style="left:711px;top:201.4px;width:5.4px;height:1.1px;background:#c4c4c4;"></div>
<div class="abs" style="left:718.4px;top:195px;width:5.4px;height:1.1px;background:#c4c4c4;"></div>
<div class="abs" style="left:718.4px;top:198.2px;width:5.4px;height:1.1px;background:#c4c4c4;"></div>
<div class="abs" style="left:718.4px;top:201.4px;width:5.4px;height:1.1px;background:#c4c4c4;"></div>
<svg class="abs" style="left:731px;top:197.5px;" width="6" height="5" viewBox="0 0 6 5" fill="none"><path d="M0.8 0.8 L3 3.8 L5.2 0.8" stroke="#c4c4c4" stroke-width="1.1"/></svg>
<div class="t" style="left:686.40px;top:223.89px;font:normal normal 11px/14px 'Liberation Sans',sans-serif;color:#444;transform:scaleX(0.8944);transform-origin:0 0;">Абзац</div>
<svg class="abs" style="left:807px;top:229px;" width="8" height="8" viewBox="0 0 8 8" fill="none"><path d="M0.6 3 V0.6 H3 M2.4 2.4 L6.2 6.2 M6.6 3.4 V6.6 H3.4" stroke="#8a8a8a" stroke-width="0.9"/></svg>
<svg class="abs" style="left:833px;top:153px;" width="28" height="29" viewBox="0 0 28 29" fill="none"><rect x="1" y="1" width="17.5" height="17.5" fill="#6daeea" stroke="#3a82cf" stroke-width="1.2"/><circle cx="17.5" cy="18.5" r="9" fill="#fff" stroke="#444" stroke-width="1.2"/></svg>
<div class="t" style="left:829.00px;top:184.00px;font:normal normal 13px/17px 'Liberation Sans',sans-serif;color:#333;transform:scaleX(0.9124);transform-origin:0 0;">Фігури</div>
<svg class="abs" style="left:843px;top:205px;" width="7" height="5" viewBox="0 0 7 5" fill="none"><path d="M0.8 0.8 L3.5 3.8 L6.2 0.8" stroke="#444" stroke-width="1.1"/></svg>
<svg class="abs" style="left:893px;top:153px;" width="29" height="29" viewBox="0 0 29 29" fill="none"><rect x="5.5" y="5.5" width="17" height="17" fill="#f9d488" stroke="#e3a93a" stroke-width="1.2"/><rect x="1" y="1" width="10" height="10" fill="#fff" stroke="#555" stroke-width="1.2"/><rect x="16.5" y="17" width="10.5" height="10.5" fill="#fff" stroke="#555" stroke-width="1.2"/></svg>
<div class="t" style="left:870.70px;top:184.00px;font:normal normal 13px/17px 'Liberation Sans',sans-serif;color:#333;transform:scaleX(0.8840);transform-origin:0 0;">Упорядкувати</div>
<svg class="abs" style="left:903.5px;top:205px;" width="7" height="5" viewBox="0 0 7 5" fill="none"><path d="M0.8 0.8 L3.5 3.8 L6.2 0.8" stroke="#444" stroke-width="1.1"/></svg>
<svg class="abs" style="left:960px;top:153px;" width="30" height="30" viewBox="0 0 30 30" fill="none"><rect x="1" y="1" width="26" height="26" rx="3" fill="#f4f4f4" stroke="#c9c9c9" stroke-width="1.2"/><path d="M11 27 C13 22 17 20 19 22 L26.5 11 L28.5 12.5 L21.5 23.5 C22 26 17 28.6 11 27Z" fill="#c8c8c8" stroke="#b4b4b4" stroke-width="0.8"/></svg>
<div class="t" style="left:951.70px;top:184.00px;font:normal normal 13px/17px 'Liberation Sans',sans-serif;color:#b8b8b8;transform:scaleX(0.8492);transform-origin:0 0;">Експрес-</div>
<div class="t" style="left:957.00px;top:198.50px;font:normal normal 13px/17px 'Liberation Sans',sans-serif;color:#b8b8b8;transform:scaleX(0.8112);transform-origin:0 0;">стилі</div>
<svg class="abs" style="left:985px;top:205.5px;" width="6" height="5" viewBox="0 0 6 5" fill="none"><path d="M0.8 0.8 L3 3.8 L5.2 0.8" stroke="#c4c4c4" stroke-width="1.1"/></svg>
<svg class="abs" style="left:1005px;top:153px;" width="17" height="16" viewBox="0 0 17 16" fill="none"><path d="M5 8 L9 2.4 L13.6 6.6 L9.4 11Z" stroke="#a6a6a6" stroke-width="1" fill="#fff"/><path d="M9 2.6 C7 0 5.6 2 6.6 4" stroke="#a6a6a6" stroke-width="0.9"/><rect x="0.6" y="12.4" width="15.4" height="3" fill="#b4b4b4"/></svg>
<svg class="abs" style="left:1032px;top:158.5px;" width="6" height="5" viewBox="0 0 6 5" fill="none"><path d="M0.8 0.8 L3 3.8 L5.2 0.8" stroke="#c4c4c4" stroke-width="1.1"/></svg>
<svg class="abs" style="left:1005px;top:177px;" width="17" height="16" viewBox="0 0 17 16" fill="none"><rect x="1.4" y="2.6" width="10" height="7.4" stroke="#a6a6a6" stroke-width="1"/><path d="M7 8.6 L13.4 1 L15.2 2.6 L9 10Z" fill="#fff" stroke="#a6a6a6" stroke-width="0.9"/><rect x="0.6" y="12.4" width="15.4" height="3" fill="#b4b4b4"/></svg>
<svg class="abs" style="left:1032px;top:183.5px;" width="6" height="5" viewBox="0 0 6 5" fill="none"><path d="M0.8 0.8 L3 3.8 L5.2 0.8" stroke="#c4c4c4" stroke-width="1.1"/></svg>
<svg class="abs" style="left:1005px;top:202px;" width="18" height="15" viewBox="0 0 18 15" fill="none"><path d="M1 9.5 L5 3 H15 L11.4 9.5Z" fill="#fff" stroke="#a6a6a6" stroke-width="1"/><path d="M1 9.5 V12.4 H11.4 V9.5 M11.4 12.4 L15 6 V3" stroke="#a6a6a6" stroke-width="1" fill="#d9d9d9"/></svg>
<svg class="abs" style="left:1026px;top:208px;" width="6" height="5" viewBox="0 0 6 5" fill="none"><path d="M0.8 0.8 L3 3.8 L5.2 0.8" stroke="#c4c4c4" stroke-width="1.1"/></svg>
<div class="t" style="left:901.50px;top:223.89px;font:normal normal 11px/14px 'Liberation Sans',sans-serif;color:#444;transform:scaleX(0.9079);transform-origin:0 0;">Малювання</div>
<svg class="abs" style="left:1043px;top:229px;" width="8" height="8" viewBox="0 0 8 8" fill="none"><path d="M0.6 3 V0.6 H3 M2.4 2.4 L6.2 6.2 M6.6 3.4 V6.6 H3.4" stroke="#8a8a8a" stroke-width="0.9"/></svg>
<svg class="abs" style="left:1067px;top:153px;" width="16" height="16" viewBox="0 0 16 16" fill="none"><circle cx="9.6" cy="6" r="4.8" stroke="#444" stroke-width="1.1"/><path d="M6.2 9.6 L1 15" stroke="#444" stroke-width="1.2" stroke-linecap="round"/></svg>
<div class="t" style="left:1086.40px;top:152.87px;font:normal normal 12.5px/16px 'Liberation Sans',sans-serif;color:#333;transform:scaleX(0.9188);transform-origin:0 0;">Знайти та замінити</div>
<svg class="abs" style="left:1066px;top:177px;" width="18" height="17" viewBox="0 0 18 17" fill="none"><text x="6" y="8" font-family="Liberation Sans,sans-serif" font-size="8" fill="#444">A</text><text x="10.5" y="15.6" font-family="Liberation Sans,sans-serif" font-size="8" fill="#444">A</text><path d="M1.4 8.6 C1.4 12.4 4 14.4 8 13.6" stroke="#2d7fc8" stroke-width="1.2"/><path d="M6 11.2 L8.4 13.6 L5.8 15.6" stroke="#2d7fc8" stroke-width="1.1"/><path d="M4.4 6.2 L1.6 8.6" stroke="#2d7fc8" stroke-width="1.1"/></svg>
<div class="t" style="left:1086.40px;top:177.47px;font:normal normal 12.5px/16px 'Liberation Sans',sans-serif;color:#333;transform:scaleX(0.9212);transform-origin:0 0;">Замінення шрифтів</div>
<svg class="abs" style="left:1068px;top:202px;" width="12" height="17" viewBox="0 0 12 17" fill="none"><path d="M1.4 1.2 V13 L4.6 10 L7 15.6 L9 14.8 L6.6 9.4 H10.6Z" stroke="#333" stroke-width="1.1" fill="#fff" stroke-linejoin="round"/></svg>
<div class="t" style="left:1086.40px;top:201.67px;font:normal normal 12.5px/16px 'Liberation Sans',sans-serif;color:#333;transform:scaleX(0.8897);transform-origin:0 0;">Виділити</div>
<svg class="abs" style="left:1137.5px;top:208px;" width="7" height="5" viewBox="0 0 7 5" fill="none"><path d="M0.8 0.8 L3.5 3.8 L6.2 0.8" stroke="#444" stroke-width="1.1"/></svg>
<div class="t" style="left:1102.40px;top:223.89px;font:normal normal 11px/14px 'Liberation Sans',sans-serif;color:#444;transform:scaleX(0.8682);transform-origin:0 0;">Редагування</div>
<svg class="abs" style="left:1239px;top:152px;" width="22" height="31" viewBox="0 0 22 31" fill="none"><rect x="6.2" y="1" width="9.6" height="18" rx="4.8" fill="#69aee9" stroke="#3a82cf" stroke-width="1"/><path d="M2 13.5 C2 19.5 6 23 11 23 C16 23 20 19.5 20 13.5" stroke="#3a6ea8" stroke-width="1.3"/><path d="M11 23 V29.4" stroke="#3a6ea8" stroke-width="1.3"/></svg>
<div class="t" style="left:1217.00px;top:185.30px;font:normal normal 13px/17px 'Liberation Sans',sans-serif;color:#333;transform:scaleX(0.8721);transform-origin:0 0;">Надиктувати</div>
<svg class="abs" style="left:1246.5px;top:206px;" width="7" height="5" viewBox="0 0 7 5" fill="none"><path d="M0.8 0.8 L3.5 3.8 L6.2 0.8" stroke="#444" stroke-width="1.1"/></svg>
<div class="t" style="left:1236.50px;top:223.89px;font:normal normal 11px/14px 'Liberation Sans',sans-serif;color:#444;transform:scaleX(0.9397);transform-origin:0 0;">Голос</div>
<svg class="abs" style="left:1319px;top:153px;" width="29" height="29" viewBox="0 0 29 29" fill="none"><rect x="0.8" y="0.8" width="27" height="27" stroke="#e07a4f" stroke-width="1.3" fill="#fdf1ec"/><rect x="4.4" y="4.4" width="8.6" height="8.6" stroke="#d9663a" stroke-width="1.1" fill="#fff"/><rect x="15.6" y="4.4" width="8.6" height="8.6" stroke="#d9663a" stroke-width="1.1" fill="#fff"/><rect x="4.4" y="15.6" width="8.6" height="8.6" stroke="#d9663a" stroke-width="1.1" fill="#fff"/><rect x="15.6" y="15.6" width="8.6" height="8.6" stroke="#d9663a" stroke-width="1.1" fill="#fff"/></svg>
<div class="t" style="left:1304.00px;top:184.00px;font:normal normal 13px/17px 'Liberation Sans',sans-serif;color:#333;transform:scaleX(0.8943);transform-origin:0 0;">Надбудови</div>
<div class="t" style="left:1307.60px;top:223.89px;font:normal normal 11px/14px 'Liberation Sans',sans-serif;color:#444;transform:scaleX(0.8967);transform-origin:0 0;">Надбудови</div>
<svg class="abs" style="left:1400px;top:151px;" width="32" height="29" viewBox="0 0 32 29" fill="none"><rect x="4.5" y="6.5" width="25" height="19.5" stroke="#6e6e6e" stroke-width="1.6" fill="#f4f4f4"/><rect x="7" y="9" width="20" height="14.5" stroke="#8a8a8a" stroke-width="1" fill="#fff"/><path d="M20 9 V23.5 M20 14 H27" stroke="#8a8a8a" stroke-width="1"/><path d="M8 0.6 H13.4 L10.8 6.6 H14 L5.6 17.6 L7.6 9.8 H3.6Z" fill="#fbc04a" stroke="#e0872d" stroke-width="0.9" stroke-linejoin="round"/></svg>
<div class="t" style="left:1383.00px;top:184.00px;font:normal normal 13px/17px 'Liberation Sans',sans-serif;color:#333;transform:scaleX(0.9039);transform-origin:0 0;">Конструктор</div>
<svg class="abs" style="left:1473px;top:225px;" width="11" height="8" viewBox="0 0 11 8" fill="none"><path d="M1 1.4 L5.5 6 L10 1.4" stroke="#333" stroke-width="1.2"/></svg>
<!-- ===== slide ===== -->
<div class="abs" id="slide" style="left:303px;top:253px;width:1172px;height:656px;background:#fff;box-shadow:-1px 0 0 0 #fff,-2px 0 0 0 #cfd0d4,0 1px 0 0 #bfc0c3,0 0 0 1px #cfd0d4">
<svg class="abs" style="left:32px;top:17px" width="110" height="90" viewBox="0 0 1247 1020" fill="none"><circle cx="622" cy="550" r="390" stroke="#17914a" stroke-width="28" fill="none"/><path d="M652 528 C600 420 480 320 445 185 C470 120 560 72 645 108 C715 62 835 92 872 150 C888 190 862 228 870 250 C950 200 1040 250 1066 300 C1108 380 1128 470 1096 550 C1088 600 1068 640 1046 658 C940 590 800 510 652 528Z" fill="#fff" stroke="#17914a" stroke-width="27" stroke-linejoin="round"/><clipPath id="cpb"><path d="M652 528 C600 420 480 320 445 185 C470 120 560 72 645 108 C715 62 835 92 872 150 C888 190 862 228 870 250 C950 200 1040 250 1066 300 C1108 380 1128 470 1096 550 C1088 600 1068 640 1046 658 C940 590 800 510 652 528Z"/></clipPath><g clip-path="url(#cpb)"><path d="M700 432 L497 325 L494 329 L689 452ZM702 431 L502 295 L499 299 L689 449ZM705 430 L512 265 L509 269 L690 447ZM707 430 L526 236 L523 239 L691 444ZM710 429 L545 208 L541 211 L692 442ZM712 429 L568 183 L564 185 L693 440ZM715 429 L595 160 L590 162 L694 438ZM717 430 L625 141 L620 143 L696 436ZM719 430 L658 127 L653 127 L698 434ZM722 431 L694 117 L689 117 L700 433ZM724 433 L731 112 L726 112 L702 431ZM726 434 L768 114 L763 113 L704 431ZM728 436 L805 120 L801 119 L707 430ZM730 437 L841 132 L837 130 L709 429ZM731 439 L875 149 L870 147 L712 429ZM732 442 L905 171 L901 169 L714 429ZM733 444 L958 167 L954 164 L717 430ZM734 446 L984 199 L980 196 L719 430ZM735 449 L1004 235 L1001 231 L721 431ZM735 451 L1020 272 L1017 268 L724 432ZM735 454 L1029 310 L1027 306 L726 434ZM734 456 L1034 349 L1032 344 L728 435ZM734 459 L1033 387 L1031 382 L729 437ZM733 461 L1027 423 L1026 418 L731 439ZM732 463 L1016 458 L1016 453 L732 441ZM731 465 L1002 490 L1003 485 L733 443ZM729 467 L994 521 L995 516 L734 446ZM727 469 L985 551 L986 546 L735 448ZM725 471 L972 580 L974 576 L735 451ZM723 472 L957 608 L959 604 L735 453Z" fill="#17914a"/></g><path d="M655 530 C640 470 690 385 780 388 C850 392 905 440 900 500 C830 490 740 500 655 530Z" fill="#17914a"/><path d="M402 612 C430 520 452 400 434 312 C400 285 340 292 300 330 C270 368 230 385 200 400 C178 440 192 490 176 510 C122 540 106 600 116 650 C130 720 170 780 212 806 C262 760 330 652 402 612Z" fill="#fff" stroke="#17914a" stroke-width="25" stroke-linejoin="round"/><clipPath id="cps"><path d="M402 612 C430 520 452 400 434 312 C400 285 340 292 300 330 C270 368 230 385 200 400 C178 440 192 490 176 510 C122 540 106 600 116 650 C130 720 170 780 212 806 C262 760 330 652 402 612Z"/></clipPath><g clip-path="url(#cps)"><path d="M319 584 L304 743 L308 744 L337 586ZM317 582 L276 743 L280 744 L334 587ZM315 580 L248 738 L252 740 L332 587ZM314 577 L220 729 L224 731 L329 587ZM313 575 L194 714 L197 717 L326 587ZM313 572 L170 695 L172 698 L324 586ZM313 570 L149 672 L151 675 L321 585ZM313 567 L132 644 L133 648 L319 584ZM313 564 L120 614 L121 618 L317 582ZM314 562 L113 582 L113 586 L316 580ZM316 560 L112 549 L112 553 L314 578ZM318 558 L117 516 L116 520 L313 575ZM320 556 L127 485 L126 488 L313 573ZM322 555 L143 455 L141 459 L313 570ZM324 553 L164 429 L162 433 L313 567ZM327 553 L189 408 L186 410 L313 565ZM329 553 L217 391 L213 393 L314 562ZM332 553 L247 380 L243 381 L316 560ZM335 553 L278 373 L274 375 L317 558ZM337 554 L309 373 L305 373 L319 556ZM339 555 L338 377 L334 377 L322 555ZM342 557 L366 386 L362 386 L324 554ZM343 559 L392 400 L388 398 L326 553ZM345 561 L414 416 L410 415 L329 553Z" fill="#17914a"/></g><path d="M400 612 C400 560 385 505 335 488 C270 488 240 545 262 602 C300 640 360 632 400 612Z" fill="#17914a"/><path d="M588 874 C556 800 538 740 546 672 C560 612 610 560 648 522 L670 548 C632 584 596 640 594 700 C588 760 594 820 588 874Z" fill="#17914a"/><path d="M548 688 C502 650 450 626 398 612 L392 632 C440 648 492 680 536 728Z" fill="#17914a"/><path id="ukr" d="M668 872 A330 330 0 0 0 932 700" fill="none"/><text font-family="Liberation Sans,sans-serif" font-weight="bold" font-size="54" fill="#17914a" letter-spacing="5"><textPath href="#ukr">УКРАЇНА</textPath></text></svg>
<div class="gh" style="left:147.30px;top:45.35px;font-size:22.50px;letter-spacing:0.180px;">Сумський національний</div>
<div class="gh" style="left:147.30px;top:70.25px;font-size:22.50px;letter-spacing:0.120px;">аграрний університет</div>
<div class="gh" style="left:796.20px;top:69.70px;font-size:22.80px;letter-spacing:0.290px;">Університет, що вивчає життя!</div>
<div class="gh" style="left:511.20px;top:622.75px;font-size:22.50px;letter-spacing:-0.230px;">SNAU.EDU.UA</div>
<div class="abs" style="left:425px;top:86px;width:361px;height:2px;background:#17914a"></div>
<div class="abs" style="left:1145.8px;top:94px;width:2.4px;height:211.5px;background:#17914a"></div>
<div class="abs" style="left:1145.8px;top:415px;width:2.4px;height:219.5px;background:#17914a"></div>
<div class="abs" style="left:674px;top:632.2px;width:474.2px;height:2.4px;background:#17914a"></div>
<div class="abs" style="left:1137.6px;top:320.4px;width:19.4px;height:19.4px;border-radius:50%;border:4.9px solid #17914a;background:#fff"></div>
<div class="abs" style="left:1137.6px;top:348.7px;width:19.4px;height:19.4px;border-radius:50%;background:#17914a"></div>
<div class="abs" style="left:1137.6px;top:380.9px;width:19.4px;height:19.4px;border-radius:50%;border:4.9px solid #17914a;background:#fff"></div>
<div class="abs" style="left:0px;top:0px">
<svg class="abs" style="left:2px;top:152px" width="115" height="145" viewBox="0 0 809 1020" fill="none"><path d="M455 585 C400 565 388 480 402 432 M152 374 C92 352 58 312 95 250 C120 190 200 150 250 120 C290 95 340 68 385 108 C400 123 405 143 410 158 C418 135 430 100 470 88 C520 78 560 108 600 135 C660 165 722 230 742 310 C748 348 700 372 655 376" stroke="#1fa055" stroke-width="16.5" stroke-linecap="round" stroke-linejoin="round" fill="none"/><path d="M410 278 H222 L150 430 H665 L592 278 H410 V400" stroke="#1fa055" stroke-width="12" stroke-linejoin="round" fill="#fff"/><path d="M185 408 C270 378 350 372 410 400 C470 372 550 378 632 408" stroke="#1fa055" stroke-width="11" fill="none"/><path d="M243 292 L190 405 M575 292 L628 405" stroke="#1fa055" stroke-width="9"/><path d="M372 222 L556 300 L546 324 L362 248Z" fill="#fff" stroke="#1fa055" stroke-width="11" stroke-linejoin="round"/><g transform="rotate(17 335 222)"><rect x="296" y="160" width="78" height="128" rx="6" fill="#fff" stroke="#1fa055" stroke-width="12"/><path d="M296 188 H374 M296 260 H374" stroke="#1fa055" stroke-width="10"/></g><path d="M262 322 H378 V346 H262Z" fill="#fff" stroke="#1fa055" stroke-width="11" stroke-linejoin="round"/><path d="M280 300 H360 V322 H280Z" fill="#fff" stroke="#1fa055" stroke-width="10" stroke-linejoin="round"/></svg>
<div class="t" style="left:2.6px;top:237.7px;font:bold 14px/16px 'Liberation Sans',sans-serif;color:#1fa055;width:115px;text-align:center;-webkit-text-stroke:.3px #1fa055;letter-spacing:0.95px">Юридичний</div>
<div class="t" style="left:2.6px;top:255.8px;font:bold 14px/16px 'Liberation Sans',sans-serif;color:#1fa055;width:115px;text-align:center;-webkit-text-stroke:.3px #1fa055;letter-spacing:0.42px">факультет</div>
<div class="t" style="left:2.6px;top:274.2px;font:bold 14px/16px 'Liberation Sans',sans-serif;color:#1fa055;width:115px;text-align:center;-webkit-text-stroke:.3px #1fa055;letter-spacing:0.50px">СНАУ</div>
</div>
<div class="t" style="left:242.00px;top:95.30px;font:bold 24.30px/28px 'Liberation Serif',serif;color:#000">Склад Експертної ради роботодавців за спеціальністю D8 «Право» :</div>
<div class="row" style="left:115.80px;top:134.76px;">1. <b>Світлана ЗАПАРА</b> – перший заступник Голови Національної служби посередництва і примирення;</div>
<div class="row" style="left:115.80px;top:168.26px;">2. <b>Тетяна МИРОНЕНКО</b> – Представниця Уповноваженого Верховної Ради України з прав людини в Сумській області;</div>
<div class="row" style="left:115.80px;top:200.26px;">3. <b>Віктор КІБЕЦЬ –</b></div>
<div class="row" style="left:292.70px;top:200.26px;word-spacing:1.03px">начальник Територіального управління державної судової адміністрації України в Сумській області (присутня –</div>
<div class="row" style="left:291.50px;top:220.96px;"><b>Олена ДАЩЕНКО</b> – завідуюча сектором організаційного забезпечення діяльності суддів та судової</div>
<div class="row" style="left:289.00px;top:240.26px;">статистики управління);</div>
<div class="row" style="left:115.80px;top:274.26px;">4. <b>Микола ШАПОВАЛ</b> – суддя Сумського окружного адміністративного суду;</div>
<div class="row" style="left:115.80px;top:306.76px;">5. <b>Оксана СОП’ЯНЕНКО</b> – суддя Центрального апеляційного господарського суду;</div>
<div class="row" style="left:115.80px;top:339.26px;">6. <b>Тетяна МІЩЕНКО</b> - директор Сумського науково-дослідного експертно-криміналістичного центру МВС України;</div>
<div class="row" style="left:115.80px;top:371.76px;">7. <b>Валентина ВОЛОБУЄВА</b> – адвокат;</div>
<div class="row" style="left:115.80px;top:402.26px;">8. <b>Володимир БОБРУЙКО</b> -</div>
<div class="row" style="left:343.75px;top:402.26px;">начальник Північно-Східного управління надання безоплатної правничої допомоги, голова</div>
<div class="row" style="left:346.00px;top:421.01px;">комісії з реорганізації Чернігівського місцевого центру з надання безоплатної вторинної</div>
<div class="row" style="left:346.00px;top:439.26px;">правової допомоги</div>
<div class="row" style="left:115.80px;top:471.76px;">9. <b>Наталія ЛЕРМОНТОВА</b> – приватний нотаріус Сумського міського нотаріального округу;</div>
<div class="row" style="left:115.80px;top:501.76px;">10. <b>Анна КЛЄЦОВА</b><span style="color:#777"> –</span> директор Аудиторської фірми «ЗЄВС» м. Суми, Власниця бухгалтерської фірми ZEVS business solution (Англія);</div>
<div class="row" style="left:115.80px;top:532.76px;">11. <b>Михайло ВІХЛЯЄВ</b> – директор Центру українсько-європейського співробітництва</div>
<div class="row" style="left:115.80px;top:562.76px;">12. <b>Олег ГОЛОВКО</b> – директор Видавничого дому «<span style="text-decoration:underline wavy #e0383e 0.8px;text-underline-offset:2px">Гельветика</span>»</div>
<div class="abs" style="left:862.5px;top:514px;width:1px;height:12px;background:#222"></div><div class="abs" style="left:860.5px;top:514px;width:5px;height:1px;background:#222"></div><div class="abs" style="left:860.5px;top:526px;width:5px;height:1px;background:#222"></div>
</div>
<div class="abs" style="left:60.6px;top:260.8px;width:175.4px;height:98.4px;background:#fff;border-radius:3px;overflow:hidden;box-shadow:0 0 0 1px #d0d2d6"><div class="abs" style="left:0;top:0;width:1172px;height:656px;transform:scale(0.14966);transform-origin:0 0"><svg class="abs" style="left:32px;top:17px" width="110" height="90" viewBox="0 0 1247 1020" fill="none"><circle cx="622" cy="550" r="390" stroke="#17914a" stroke-width="28" fill="none"/><path d="M652 528 C600 420 480 320 445 185 C470 120 560 72 645 108 C715 62 835 92 872 150 C888 190 862 228 870 250 C950 200 1040 250 1066 300 C1108 380 1128 470 1096 550 C1088 600 1068 640 1046 658 C940 590 800 510 652 528Z" fill="#fff" stroke="#17914a" stroke-width="27" stroke-linejoin="round"/><clipPath id="cpb1"><path d="M652 528 C600 420 480 320 445 185 C470 120 560 72 645 108 C715 62 835 92 872 150 C888 190 862 228 870 250 C950 200 1040 250 1066 300 C1108 380 1128 470 1096 550 C1088 600 1068 640 1046 658 C940 590 800 510 652 528Z"/></clipPath><g clip-path="url(#cpb1)"><path d="M700 432 L497 325 L494 329 L689 452ZM702 431 L502 295 L499 299 L689 449ZM705 430 L512 265 L509 269 L690 447ZM707 430 L526 236 L523 239 L691 444ZM710 429 L545 208 L541 211 L692 442ZM712 429 L568 183 L564 185 L693 440ZM715 429 L595 160 L590 162 L694 438ZM717 430 L625 141 L620 143 L696 436ZM719 430 L658 127 L653 127 L698 434ZM722 431 L694 117 L689 117 L700 433ZM724 433 L731 112 L726 112 L702 431ZM726 434 L768 114 L763 113 L704 431ZM728 436 L805 120 L801 119 L707 430ZM730 437 L841 132 L837 130 L709 429ZM731 439 L875 149 L870 147 L712 429ZM732 442 L905 171 L901 169 L714 429ZM733 444 L958 167 L954 164 L717 430ZM734 446 L984 199 L980 196 L719 430ZM735 449 L1004 235 L1001 231 L721 431ZM735 451 L1020 272 L1017 268 L724 432ZM735 454 L1029 310 L1027 306 L726 434ZM734 456 L1034 349 L1032 344 L728 435ZM734 459 L1033 387 L1031 382 L729 437ZM733 461 L1027 423 L1026 418 L731 439ZM732 463 L1016 458 L1016 453 L732 441ZM731 465 L1002 490 L1003 485 L733 443ZM729 467 L994 521 L995 516 L734 446ZM727 469 L985 551 L986 546 L735 448ZM725 471 L972 580 L974 576 L735 451ZM723 472 L957 608 L959 604 L735 453Z" fill="#17914a"/></g><path d="M655 530 C640 470 690 385 780 388 C850 392 905 440 900 500 C830 490 740 500 655 530Z" fill="#17914a"/><path d="M402 612 C430 520 452 400 434 312 C400 285 340 292 300 330 C270 368 230 385 200 400 C178 440 192 490 176 510 C122 540 106 600 116 650 C130 720 170 780 212 806 C262 760 330 652 402 612Z" fill="#fff" stroke="#17914a" stroke-width="25" stroke-linejoin="round"/><clipPath id="cps1"><path d="M402 612 C430 520 452 400 434 312 C400 285 340 292 300 330 C270 368 230 385 200 400 C178 440 192 490 176 510 C122 540 106 600 116 650 C130 720 170 780 212 806 C262 760 330 652 402 612Z"/></clipPath><g clip-path="url(#cps1)"><path d="M319 584 L304 743 L308 744 L337 586ZM317 582 L276 743 L280 744 L334 587ZM315 580 L248 738 L252 740 L332 587ZM314 577 L220 729 L224 731 L329 587ZM313 575 L194 714 L197 717 L326 587ZM313 572 L170 695 L172 698 L324 586ZM313 570 L149 672 L151 675 L321 585ZM313 567 L132 644 L133 648 L319 584ZM313 564 L120 614 L121 618 L317 582ZM314 562 L113 582 L113 586 L316 580ZM316 560 L112 549 L112 553 L314 578ZM318 558 L117 516 L116 520 L313 575ZM320 556 L127 485 L126 488 L313 573ZM322 555 L143 455 L141 459 L313 570ZM324 553 L164 429 L162 433 L313 567ZM327 553 L189 408 L186 410 L313 565ZM329 553 L217 391 L213 393 L314 562ZM332 553 L247 380 L243 381 L316 560ZM335 553 L278 373 L274 375 L317 558ZM337 554 L309 373 L305 373 L319 556ZM339 555 L338 377 L334 377 L322 555ZM342 557 L366 386 L362 386 L324 554ZM343 559 L392 400 L388 398 L326 553ZM345 561 L414 416 L410 415 L329 553Z" fill="#17914a"/></g><path d="M400 612 C400 560 385 505 335 488 C270 488 240 545 262 602 C300 640 360 632 400 612Z" fill="#17914a"/><path d="M588 874 C556 800 538 740 546 672 C560 612 610 560 648 522 L670 548 C632 584 596 640 594 700 C588 760 594 820 588 874Z" fill="#17914a"/><path d="M548 688 C502 650 450 626 398 612 L392 632 C440 648 492 680 536 728Z" fill="#17914a"/><path id="ukr1" d="M668 872 A330 330 0 0 0 932 700" fill="none"/><text font-family="Liberation Sans,sans-serif" font-weight="bold" font-size="54" fill="#17914a" letter-spacing="5"><textPath href="#ukr1">УКРАЇНА</textPath></text></svg><div class="gh" style="left:147.30px;top:45.35px;font-size:22.50px;letter-spacing:0.180px;">Сумський національний</div><div class="gh" style="left:147.30px;top:70.25px;font-size:22.50px;letter-spacing:0.120px;">аграрний університет</div><div class="gh" style="left:796.20px;top:69.70px;font-size:22.80px;letter-spacing:0.290px;">Університет, що вивчає життя!</div><div class="gh" style="left:511.20px;top:622.75px;font-size:22.50px;letter-spacing:-0.230px;">SNAU.EDU.UA</div><div class="abs" style="left:425px;top:86px;width:361px;height:2px;background:#17914a"></div><div class="abs" style="left:1145.8px;top:94px;width:2.4px;height:211.5px;background:#17914a"></div><div class="abs" style="left:1145.8px;top:415px;width:2.4px;height:219.5px;background:#17914a"></div><div class="abs" style="left:674px;top:632.2px;width:474.2px;height:2.4px;background:#17914a"></div><div class="abs" style="left:1137.6px;top:320.4px;width:19.4px;height:19.4px;border-radius:50%;border:4.9px solid #17914a;background:#fff"></div><div class="abs" style="left:1137.6px;top:348.7px;width:19.4px;height:19.4px;border-radius:50%;background:#17914a"></div><div class="abs" style="left:1137.6px;top:380.9px;width:19.4px;height:19.4px;border-radius:50%;border:4.9px solid #17914a;background:#fff"></div><div class="abs" style="left:0;top:0;transform:translate(29px,-44px);transform-origin:0 0"><div class="abs" style="left:0px;top:0px"><svg class="abs" style="left:2px;top:152px" width="115" height="145" viewBox="0 0 809 1020" fill="none"><path d="M455 585 C400 565 388 480 402 432 M152 374 C92 352 58 312 95 250 C120 190 200 150 250 120 C290 95 340 68 385 108 C400 123 405 143 410 158 C418 135 430 100 470 88 C520 78 560 108 600 135 C660 165 722 230 742 310 C748 348 700 372 655 376" stroke="#1fa055" stroke-width="16.5" stroke-linecap="round" stroke-linejoin="round" fill="none"/><path d="M410 278 H222 L150 430 H665 L592 278 H410 V400" stroke="#1fa055" stroke-width="12" stroke-linejoin="round" fill="#fff"/><path d="M185 408 C270 378 350 372 410 400 C470 372 550 378 632 408" stroke="#1fa055" stroke-width="11" fill="none"/><path d="M243 292 L190 405 M575 292 L628 405" stroke="#1fa055" stroke-width="9"/><path d="M372 222 L556 300 L546 324 L362 248Z" fill="#fff" stroke="#1fa055" stroke-width="11" stroke-linejoin="round"/><g transform="rotate(17 335 222)"><rect x="296" y="160" width="78" height="128" rx="6" fill="#fff" stroke="#1fa055" stroke-width="12"/><path d="M296 188 H374 M296 260 H374" stroke="#1fa055" stroke-width="10"/></g><path d="M262 322 H378 V346 H262Z" fill="#fff" stroke="#1fa055" stroke-width="11" stroke-linejoin="round"/><path d="M280 300 H360 V322 H280Z" fill="#fff" stroke="#1fa055" stroke-width="10" stroke-linejoin="round"/></svg><div class="t" style="left:2.6px;top:237.7px;font:bold 14px/16px 'Liberation Sans',sans-serif;color:#1fa055;width:115px;text-align:center;-webkit-text-stroke:.3px #1fa055;letter-spacing:0.95px">Юридичний</div><div class="t" style="left:2.6px;top:255.8px;font:bold 14px/16px 'Liberation Sans',sans-serif;color:#1fa055;width:115px;text-align:center;-webkit-text-stroke:.3px #1fa055;letter-spacing:0.42px">факультет</div><div class="t" style="left:2.6px;top:274.2px;font:bold 14px/16px 'Liberation Sans',sans-serif;color:#1fa055;width:115px;text-align:center;-webkit-text-stroke:.3px #1fa055;letter-spacing:0.50px">СНАУ</div></div></div><div class="t" style="left:178px;top:161px;width:1000px;text-align:center;font:bold 48px/52px 'Liberation Sans',sans-serif;letter-spacing:2px;color:#7f9f36">Засідання</div><div class="t" style="left:178px;top:221px;width:1000px;text-align:center;font:bold 48px/52px 'Liberation Sans',sans-serif;letter-spacing:2px;color:#7f9f36">Експертної ради роботодавців</div><div class="t" style="left:178px;top:276px;width:1000px;text-align:center;font:bold 48px/52px 'Liberation Sans',sans-serif;letter-spacing:2px;color:#7f9f36">за спеціальністю D8 Право</div><div class="t" style="left:178px;top:385px;width:1000px;text-align:center;font:bold 48px/52px 'Liberation Sans',sans-serif;letter-spacing:2px;color:#7f9f36">22.01.2026 р.</div></div></div>
<div class="abs" style="left:57.6px;top:376.4px;width:181.6px;height:104px;border:2.4px solid #7d1a2b;border-radius:5px;background:#fff"></div>
<div class="abs" style="left:60.8px;top:379.4px;width:175.4px;height:98.4px;background:#fff;border-radius:3px;overflow:hidden;box-shadow:0 0 0 1px #d0d2d6"><div class="abs" style="left:0;top:0;width:1172px;height:656px;transform:scale(0.14966);transform-origin:0 0"><svg class="abs" style="left:32px;top:17px" width="110" height="90" viewBox="0 0 1247 1020" fill="none"><circle cx="622" cy="550" r="390" stroke="#17914a" stroke-width="28" fill="none"/><path d="M652 528 C600 420 480 320 445 185 C470 120 560 72 645 108 C715 62 835 92 872 150 C888 190 862 228 870 250 C950 200 1040 250 1066 300 C1108 380 1128 470 1096 550 C1088 600 1068 640 1046 658 C940 590 800 510 652 528Z" fill="#fff" stroke="#17914a" stroke-width="27" stroke-linejoin="round"/><clipPath id="cpb2"><path d="M652 528 C600 420 480 320 445 185 C470 120 560 72 645 108 C715 62 835 92 872 150 C888 190 862 228 870 250 C950 200 1040 250 1066 300 C1108 380 1128 470 1096 550 C1088 600 1068 640 1046 658 C940 590 800 510 652 528Z"/></clipPath><g clip-path="url(#cpb2)"><path d="M700 432 L497 325 L494 329 L689 452ZM702 431 L502 295 L499 299 L689 449ZM705 430 L512 265 L509 269 L690 447ZM707 430 L526 236 L523 239 L691 444ZM710 429 L545 208 L541 211 L692 442ZM712 429 L568 183 L564 185 L693 440ZM715 429 L595 160 L590 162 L694 438ZM717 430 L625 141 L620 143 L696 436ZM719 430 L658 127 L653 127 L698 434ZM722 431 L694 117 L689 117 L700 433ZM724 433 L731 112 L726 112 L702 431ZM726 434 L768 114 L763 113 L704 431ZM728 436 L805 120 L801 119 L707 430ZM730 437 L841 132 L837 130 L709 429ZM731 439 L875 149 L870 147 L712 429ZM732 442 L905 171 L901 169 L714 429ZM733 444 L958 167 L954 164 L717 430ZM734 446 L984 199 L980 196 L719 430ZM735 449 L1004 235 L1001 231 L721 431ZM735 451 L1020 272 L1017 268 L724 432ZM735 454 L1029 310 L1027 306 L726 434ZM734 456 L1034 349 L1032 344 L728 435ZM734 459 L1033 387 L1031 382 L729 437ZM733 461 L1027 423 L1026 418 L731 439ZM732 463 L1016 458 L1016 453 L732 441ZM731 465 L1002 490 L1003 485 L733 443ZM729 467 L994 521 L995 516 L734 446ZM727 469 L985 551 L986 546 L735 448ZM725 471 L972 580 L974 576 L735 451ZM723 472 L957 608 L959 604 L735 453Z" fill="#17914a"/></g><path d="M655 530 C640 470 690 385 780 388 C850 392 905 440 900 500 C830 490 740 500 655 530Z" fill="#17914a"/><path d="M402 612 C430 520 452 400 434 312 C400 285 340 292 300 330 C270 368 230 385 200 400 C178 440 192 490 176 510 C122 540 106 600 116 650 C130 720 170 780 212 806 C262 760 330 652 402 612Z" fill="#fff" stroke="#17914a" stroke-width="25" stroke-linejoin="round"/><clipPath id="cps2"><path d="M402 612 C430 520 452 400 434 312 C400 285 340 292 300 330 C270 368 230 385 200 400 C178 440 192 490 176 510 C122 540 106 600 116 650 C130 720 170 780 212 806 C262 760 330 652 402 612Z"/></clipPath><g clip-path="url(#cps2)"><path d="M319 584 L304 743 L308 744 L337 586ZM317 582 L276 743 L280 744 L334 587ZM315 580 L248 738 L252 740 L332 587ZM314 577 L220 729 L224 731 L329 587ZM313 575 L194 714 L197 717 L326 587ZM313 572 L170 695 L172 698 L324 586ZM313 570 L149 672 L151 675 L321 585ZM313 567 L132 644 L133 648 L319 584ZM313 564 L120 614 L121 618 L317 582ZM314 562 L113 582 L113 586 L316 580ZM316 560 L112 549 L112 553 L314 578ZM318 558 L117 516 L116 520 L313 575ZM320 556 L127 485 L126 488 L313 573ZM322 555 L143 455 L141 459 L313 570ZM324 553 L164 429 L162 433 L313 567ZM327 553 L189 408 L186 410 L313 565ZM329 553 L217 391 L213 393 L314 562ZM332 553 L247 380 L243 381 L316 560ZM335 553 L278 373 L274 375 L317 558ZM337 554 L309 373 L305 373 L319 556ZM339 555 L338 377 L334 377 L322 555ZM342 557 L366 386 L362 386 L324 554ZM343 559 L392 400 L388 398 L326 553ZM345 561 L414 416 L410 415 L329 553Z" fill="#17914a"/></g><path d="M400 612 C400 560 385 505 335 488 C270 488 240 545 262 602 C300 640 360 632 400 612Z" fill="#17914a"/><path d="M588 874 C556 800 538 740 546 672 C560 612 610 560 648 522 L670 548 C632 584 596 640 594 700 C588 760 594 820 588 874Z" fill="#17914a"/><path d="M548 688 C502 650 450 626 398 612 L392 632 C440 648 492 680 536 728Z" fill="#17914a"/><path id="ukr2" d="M668 872 A330 330 0 0 0 932 700" fill="none"/><text font-family="Liberation Sans,sans-serif" font-weight="bold" font-size="54" fill="#17914a" letter-spacing="5"><textPath href="#ukr2">УКРАЇНА</textPath></text></svg><div class="gh" style="left:147.30px;top:45.35px;font-size:22.50px;letter-spacing:0.180px;">Сумський національний</div><div class="gh" style="left:147.30px;top:70.25px;font-size:22.50px;letter-spacing:0.120px;">аграрний університет</div><div class="gh" style="left:796.20px;top:69.70px;font-size:22.80px;letter-spacing:0.290px;">Університет, що вивчає життя!</div><div class="gh" style="left:511.20px;top:622.75px;font-size:22.50px;letter-spacing:-0.230px;">SNAU.EDU.UA</div><div class="abs" style="left:425px;top:86px;width:361px;height:2px;background:#17914a"></div><div class="abs" style="left:1145.8px;top:94px;width:2.4px;height:211.5px;background:#17914a"></div><div class="abs" style="left:1145.8px;top:415px;width:2.4px;height:219.5px;background:#17914a"></div><div class="abs" style="left:674px;top:632.2px;width:474.2px;height:2.4px;background:#17914a"></div><div class="abs" style="left:1137.6px;top:320.4px;width:19.4px;height:19.4px;border-radius:50%;border:4.9px solid #17914a;background:#fff"></div><div class="abs" style="left:1137.6px;top:348.7px;width:19.4px;height:19.4px;border-radius:50%;background:#17914a"></div><div class="abs" style="left:1137.6px;top:380.9px;width:19.4px;height:19.4px;border-radius:50%;border:4.9px solid #17914a;background:#fff"></div><div class="abs" style="left:0px;top:0px"><svg class="abs" style="left:2px;top:152px" width="115" height="145" viewBox="0 0 809 1020" fill="none"><path d="M455 585 C400 565 388 480 402 432 M152 374 C92 352 58 312 95 250 C120 190 200 150 250 120 C290 95 340 68 385 108 C400 123 405 143 410 158 C418 135 430 100 470 88 C520 78 560 108 600 135 C660 165 722 230 742 310 C748 348 700 372 655 376" stroke="#1fa055" stroke-width="16.5" stroke-linecap="round" stroke-linejoin="round" fill="none"/><path d="M410 278 H222 L150 430 H665 L592 278 H410 V400" stroke="#1fa055" stroke-width="12" stroke-linejoin="round" fill="#fff"/><path d="M185 408 C270 378 350 372 410 400 C470 372 550 378 632 408" stroke="#1fa055" stroke-width="11" fill="none"/><path d="M243 292 L190 405 M575 292 L628 405" stroke="#1fa055" stroke-width="9"/><path d="M372 222 L556 300 L546 324 L362 248Z" fill="#fff" stroke="#1fa055" stroke-width="11" stroke-linejoin="round"/><g transform="rotate(17 335 222)"><rect x="296" y="160" width="78" height="128" rx="6" fill="#fff" stroke="#1fa055" stroke-width="12"/><path d="M296 188 H374 M296 260 H374" stroke="#1fa055" stroke-width="10"/></g><path d="M262 322 H378 V346 H262Z" fill="#fff" stroke="#1fa055" stroke-width="11" stroke-linejoin="round"/><path d="M280 300 H360 V322 H280Z" fill="#fff" stroke="#1fa055" stroke-width="10" stroke-linejoin="round"/></svg><div class="t" style="left:2.6px;top:237.7px;font:bold 14px/16px 'Liberation Sans',sans-serif;color:#1fa055;width:115px;text-align:center;-webkit-text-stroke:.3px #1fa055;letter-spacing:0.95px">Юридичний</div><div class="t" style="left:2.6px;top:255.8px;font:bold 14px/16px 'Liberation Sans',sans-serif;color:#1fa055;width:115px;text-align:center;-webkit-text-stroke:.3px #1fa055;letter-spacing:0.42px">факультет</div><div class="t" style="left:2.6px;top:274.2px;font:bold 14px/16px 'Liberation Sans',sans-serif;color:#1fa055;width:115px;text-align:center;-webkit-text-stroke:.3px #1fa055;letter-spacing:0.50px">СНАУ</div></div><div class="t" style="left:242.00px;top:95.30px;font:bold 24.30px/28px 'Liberation Serif',serif;color:#000">Склад Експертної ради роботодавців за спеціальністю D8 «Право» :</div><div class="row" style="left:115.80px;top:134.76px;">1. <b>Світлана ЗАПАРА</b> – перший заступник Голови Національної служби посередництва і примирення;</div><div class="row" style="left:115.80px;top:168.26px;">2. <b>Тетяна МИРОНЕНКО</b> – Представниця Уповноваженого Верховної Ради України з прав людини в Сумській області;</div><div class="row" style="left:115.80px;top:200.26px;">3. <b>Віктор КІБЕЦЬ –</b></div><div class="row" style="left:292.70px;top:200.26px;word-spacing:1.03px">начальник Територіального управління державної судової адміністрації України в Сумській області (присутня –</div><div class="row" style="left:291.50px;top:220.96px;"><b>Олена ДАЩЕНКО</b> – завідуюча сектором організаційного забезпечення діяльності суддів та судової</div><div class="row" style="left:289.00px;top:240.26px;">статистики управління);</div><div class="row" style="left:115.80px;top:274.26px;">4. <b>Микола ШАПОВАЛ</b> – суддя Сумського окружного адміністративного суду;</div><div class="row" style="left:115.80px;top:306.76px;">5. <b>Оксана СОП’ЯНЕНКО</b> – суддя Центрального апеляційного господарського суду;</div><div class="row" style="left:115.80px;top:339.26px;">6. <b>Тетяна МІЩЕНКО</b> - директор Сумського науково-дослідного експертно-криміналістичного центру МВС України;</div><div class="row" style="left:115.80px;top:371.76px;">7. <b>Валентина ВОЛОБУЄВА</b> – адвокат;</div><div class="row" style="left:115.80px;top:402.26px;">8. <b>Володимир БОБРУЙКО</b> -</div><div class="row" style="left:343.75px;top:402.26px;">начальник Північно-Східного управління надання безоплатної правничої допомоги, голова</div><div class="row" style="left:346.00px;top:421.01px;">комісії з реорганізації Чернігівського місцевого центру з надання безоплатної вторинної</div><div class="row" style="left:346.00px;top:439.26px;">правової допомоги</div><div class="row" style="left:115.80px;top:471.76px;">9. <b>Наталія ЛЕРМОНТОВА</b> – приватний нотаріус Сумського міського нотаріального округу;</div><div class="row" style="left:115.80px;top:501.76px;">10. <b>Анна КЛЄЦОВА</b><span style="color:#777"> –</span> директор Аудиторської фірми «ЗЄВС» м. Суми, Власниця бухгалтерської фірми ZEVS business solution (Англія);</div><div class="row" style="left:115.80px;top:532.76px;">11. <b>Михайло ВІХЛЯЄВ</b> – директор Центру українсько-європейського співробітництва</div><div class="row" style="left:115.80px;top:562.76px;">12. <b>Олег ГОЛОВКО</b> – директор Видавничого дому «<span style="text-decoration:underline wavy #e0383e 0.8px;text-underline-offset:2px">Гельветика</span>»</div></div></div>
<div class="abs" style="left:60.6px;top:498.8px;width:175.4px;height:98.4px;background:#fff;border-radius:3px;overflow:hidden;box-shadow:0 0 0 1px #d0d2d6"><div class="abs" style="left:0;top:0;width:1172px;height:656px;transform:scale(0.14966);transform-origin:0 0"><svg class="abs" style="left:32px;top:17px" width="110" height="90" viewBox="0 0 1247 1020" fill="none"><circle cx="622" cy="550" r="390" stroke="#17914a" stroke-width="28" fill="none"/><path d="M652 528 C600 420 480 320 445 185 C470 120 560 72 645 108 C715 62 835 92 872 150 C888 190 862 228 870 250 C950 200 1040 250 1066 300 C1108 380 1128 470 1096 550 C1088 600 1068 640 1046 658 C940 590 800 510 652 528Z" fill="#fff" stroke="#17914a" stroke-width="27" stroke-linejoin="round"/><clipPath id="cpb3"><path d="M652 528 C600 420 480 320 445 185 C470 120 560 72 645 108 C715 62 835 92 872 150 C888 190 862 228 870 250 C950 200 1040 250 1066 300 C1108 380 1128 470 1096 550 C1088 600 1068 640 1046 658 C940 590 800 510 652 528Z"/></clipPath><g clip-path="url(#cpb3)"><path d="M700 432 L497 325 L494 329 L689 452ZM702 431 L502 295 L499 299 L689 449ZM705 430 L512 265 L509 269 L690 447ZM707 430 L526 236 L523 239 L691 444ZM710 429 L545 208 L541 211 L692 442ZM712 429 L568 183 L564 185 L693 440ZM715 429 L595 160 L590 162 L694 438ZM717 430 L625 141 L620 143 L696 436ZM719 430 L658 127 L653 127 L698 434ZM722 431 L694 117 L689 117 L700 433ZM724 433 L731 112 L726 112 L702 431ZM726 434 L768 114 L763 113 L704 431ZM728 436 L805 120 L801 119 L707 430ZM730 437 L841 132 L837 130 L709 429ZM731 439 L875 149 L870 147 L712 429ZM732 442 L905 171 L901 169 L714 429ZM733 444 L958 167 L954 164 L717 430ZM734 446 L984 199 L980 196 L719 430ZM735 449 L1004 235 L1001 231 L721 431ZM735 451 L1020 272 L1017 268 L724 432ZM735 454 L1029 310 L1027 306 L726 434ZM734 456 L1034 349 L1032 344 L728 435ZM734 459 L1033 387 L1031 382 L729 437ZM733 461 L1027 423 L1026 418 L731 439ZM732 463 L1016 458 L1016 453 L732 441ZM731 465 L1002 490 L1003 485 L733 443ZM729 467 L994 521 L995 516 L734 446ZM727 469 L985 551 L986 546 L735 448ZM725 471 L972 580 L974 576 L735 451ZM723 472 L957 608 L959 604 L735 453Z" fill="#17914a"/></g><path d="M655 530 C640 470 690 385 780 388 C850 392 905 440 900 500 C830 490 740 500 655 530Z" fill="#17914a"/><path d="M402 612 C430 520 452 400 434 312 C400 285 340 292 300 330 C270 368 230 385 200 400 C178 440 192 490 176 510 C122 540 106 600 116 650 C130 720 170 780 212 806 C262 760 330 652 402 612Z" fill="#fff" stroke="#17914a" stroke-width="25" stroke-linejoin="round"/><clipPath id="cps3"><path d="M402 612 C430 520 452 400 434 312 C400 285 340 292 300 330 C270 368 230 385 200 400 C178 440 192 490 176 510 C122 540 106 600 116 650 C130 720 170 780 212 806 C262 760 330 652 402 612Z"/></clipPath><g clip-path="url(#cps3)"><path d="M319 584 L304 743 L308 744 L337 586ZM317 582 L276 743 L280 744 L334 587ZM315 580 L248 738 L252 740 L332 587ZM314 577 L220 729 L224 731 L329 587ZM313 575 L194 714 L197 717 L326 587ZM313 572 L170 695 L172 698 L324 586ZM313 570 L149 672 L151 675 L321 585ZM313 567 L132 644 L133 648 L319 584ZM313 564 L120 614 L121 618 L317 582ZM314 562 L113 582 L113 586 L316 580ZM316 560 L112 549 L112 553 L314 578ZM318 558 L117 516 L116 520 L313 575ZM320 556 L127 485 L126 488 L313 573ZM322 555 L143 455 L141 459 L313 570ZM324 553 L164 429 L162 433 L313 567ZM327 553 L189 408 L186 410 L313 565ZM329 553 L217 391 L213 393 L314 562ZM332 553 L247 380 L243 381 L316 560ZM335 553 L278 373 L274 375 L317 558ZM337 554 L309 373 L305 373 L319 556ZM339 555 L338 377 L334 377 L322 555ZM342 557 L366 386 L362 386 L324 554ZM343 559 L392 400 L388 398 L326 553ZM345 561 L414 416 L410 415 L329 553Z" fill="#17914a"/></g><path d="M400 612 C400 560 385 505 335 488 C270 488 240 545 262 602 C300 640 360 632 400 612Z" fill="#17914a"/><path d="M588 874 C556 800 538 740 546 672 C560 612 610 560 648 522 L670 548 C632 584 596 640 594 700 C588 760 594 820 588 874Z" fill="#17914a"/><path d="M548 688 C502 650 450 626 398 612 L392 632 C440 648 492 680 536 728Z" fill="#17914a"/><path id="ukr3" d="M668 872 A330 330 0 0 0 932 700" fill="none"/><text font-family="Liberation Sans,sans-serif" font-weight="bold" font-size="54" fill="#17914a" letter-spacing="5"><textPath href="#ukr3">УКРАЇНА</textPath></text></svg><div class="gh" style="left:147.30px;top:45.35px;font-size:22.50px;letter-spacing:0.180px;">Сумський національний</div><div class="gh" style="left:147.30px;top:70.25px;font-size:22.50px;letter-spacing:0.120px;">аграрний університет</div><div class="gh" style="left:796.20px;top:69.70px;font-size:22.80px;letter-spacing:0.290px;">Університет, що вивчає життя!</div><div class="gh" style="left:511.20px;top:622.75px;font-size:22.50px;letter-spacing:-0.230px;">SNAU.EDU.UA</div><div class="abs" style="left:425px;top:86px;width:361px;height:2px;background:#17914a"></div><div class="abs" style="left:1145.8px;top:94px;width:2.4px;height:211.5px;background:#17914a"></div><div class="abs" style="left:1145.8px;top:415px;width:2.4px;height:219.5px;background:#17914a"></div><div class="abs" style="left:674px;top:632.2px;width:474.2px;height:2.4px;background:#17914a"></div><div class="abs" style="left:1137.6px;top:320.4px;width:19.4px;height:19.4px;border-radius:50%;border:4.9px solid #17914a;background:#fff"></div><div class="abs" style="left:1137.6px;top:348.7px;width:19.4px;height:19.4px;border-radius:50%;background:#17914a"></div><div class="abs" style="left:1137.6px;top:380.9px;width:19.4px;height:19.4px;border-radius:50%;border:4.9px solid #17914a;background:#fff"></div><div class="abs" style="left:0;top:0;transform:translate(29.3px,383px) scale(.87);transform-origin:0 0"><div class="abs" style="left:0px;top:0px"><svg class="abs" style="left:2px;top:152px" width="115" height="145" viewBox="0 0 809 1020" fill="none"><path d="M455 585 C400 565 388 480 402 432 M152 374 C92 352 58 312 95 250 C120 190 200 150 250 120 C290 95 340 68 385 108 C400 123 405 143 410 158 C418 135 430 100 470 88 C520 78 560 108 600 135 C660 165 722 230 742 310 C748 348 700 372 655 376" stroke="#1fa055" stroke-width="16.5" stroke-linecap="round" stroke-linejoin="round" fill="none"/><path d="M410 278 H222 L150 430 H665 L592 278 H410 V400" stroke="#1fa055" stroke-width="12" stroke-linejoin="round" fill="#fff"/><path d="M185 408 C270 378 350 372 410 400 C470 372 550 378 632 408" stroke="#1fa055" stroke-width="11" fill="none"/><path d="M243 292 L190 405 M575 292 L628 405" stroke="#1fa055" stroke-width="9"/><path d="M372 222 L556 300 L546 324 L362 248Z" fill="#fff" stroke="#1fa055" stroke-width="11" stroke-linejoin="round"/><g transform="rotate(17 335 222)"><rect x="296" y="160" width="78" height="128" rx="6" fill="#fff" stroke="#1fa055" stroke-width="12"/><path d="M296 188 H374 M296 260 H374" stroke="#1fa055" stroke-width="10"/></g><path d="M262 322 H378 V346 H262Z" fill="#fff" stroke="#1fa055" stroke-width="11" stroke-linejoin="round"/><path d="M280 300 H360 V322 H280Z" fill="#fff" stroke="#1fa055" stroke-width="10" stroke-linejoin="round"/></svg><div class="t" style="left:2.6px;top:237.7px;font:bold 14px/16px 'Liberation Sans',sans-serif;color:#1fa055;width:115px;text-align:center;-webkit-text-stroke:.3px #1fa055;letter-spacing:0.95px">Юридичний</div><div class="t" style="left:2.6px;top:255.8px;font:bold 14px/16px 'Liberation Sans',sans-serif;color:#1fa055;width:115px;text-align:center;-webkit-text-stroke:.3px #1fa055;letter-spacing:0.42px">факультет</div><div class="t" style="left:2.6px;top:274.2px;font:bold 14px/16px 'Liberation Sans',sans-serif;color:#1fa055;width:115px;text-align:center;-webkit-text-stroke:.3px #1fa055;letter-spacing:0.50px">СНАУ</div></div></div><div class="t" style="left:70px;top:228px;width:520px;text-align:center;font:bold 33px/40px 'Liberation Sans',sans-serif;color:#1d5c58">Стратегія трансформації та</div><div class="t" style="left:70px;top:275px;width:520px;text-align:center;font:bold 33px/40px 'Liberation Sans',sans-serif;color:#1d5c58">розширення можливостей</div><div class="t" style="left:70px;top:322px;width:520px;text-align:center;font:bold 33px/40px 'Liberation Sans',sans-serif;color:#1d5c58">Сумського національного</div><div class="t" style="left:70px;top:369px;width:520px;text-align:center;font:bold 33px/40px 'Liberation Sans',sans-serif;color:#1d5c58">аграрного університету</div><div class="t" style="left:70px;top:417px;width:520px;text-align:center;font:bold 33px/40px 'Liberation Sans',sans-serif;color:#6a9a1f">2026-2030</div><div class="abs" style="left:44px;top:342px;width:22px;height:134px;background:linear-gradient(#a5cc3f,#5e9e1e)"></div><div class="abs" style="left:880px;top:264px;width:173px;height:173px;border-radius:50%;background:#eceeee"></div><div class="abs" style="left:668px;top:271px;width:250px;height:205px;background:#ebebe8;border-radius:150px 0 0 0"></div><div class="abs" style="left:772px;top:330px;width:112px;height:130px;border-radius:50% 50% 20% 20%;background:#5a3424"></div><div class="abs" style="left:796px;top:372px;width:64px;height:66px;border-radius:40%;background:#e2b59a"></div><div class="abs" style="left:723px;top:420px;width:236px;height:56px;background:#1d7a55;border-radius:6px 6px 0 0"></div><div class="t" style="left:990px;top:202px;font:bold 42px/46px 'Liberation Sans',sans-serif;color:#2aa86b;letter-spacing:1px">СНАУ</div><div class="abs" style="left:940px;top:202px;width:50px;height:44px;background:#2aa86b;border-radius:50% 50% 12px 12px"></div></div></div>
<!-- ===== thumbnails 4-6, scrollbars, status bar, tooltip ===== -->
<div class="t" style="left:38.50px;top:255.65px;font:normal normal 14px/18px 'Liberation Sans',sans-serif;color:#555;">1</div>
<div class="t" style="left:38.50px;top:493.65px;font:normal normal 14px/18px 'Liberation Sans',sans-serif;color:#555;">3</div>
<div class="t" style="left:38.50px;top:612.65px;font:normal normal 14px/18px 'Liberation Sans',sans-serif;color:#555;">4</div>
<div class="t" style="left:38.50px;top:731.65px;font:normal normal 14px/18px 'Liberation Sans',sans-serif;color:#555;">5</div>
<div class="t" style="left:38.50px;top:850.65px;font:normal normal 14px/18px 'Liberation Sans',sans-serif;color:#555;">6</div>
<div class="t" style="left:38.00px;top:374.65px;font:normal normal 14px/18px 'Liberation Sans',sans-serif;color:#c0452c;">2</div>
<div class="abs" style="left:60.6px;top:617.4px;width:175.4px;height:98.6px;background:#fff;border-radius:3px;overflow:hidden;box-shadow:0 0 0 1px #d0d2d6;"><svg class="abs" style="left:0;top:0" width="175.4" height="98.6" viewBox="0 0 175.4 98.6"><defs><clipPath id="c4"><path d="M108 0 H175.4 V68 C150 66 112 42 108 0Z"/></clipPath><linearGradient id="g4" x1="0" x2="1"><stop offset="0" stop-color="#d9d7d2"/><stop offset=".5" stop-color="#c4c2bd"/><stop offset="1" stop-color="#6f6d69"/></linearGradient><filter id="b4"><feGaussianBlur stdDeviation=".5"/></filter></defs><g clip-path="url(#c4)"><rect x="108" y="0" width="68" height="68" fill="url(#g4)"/><g filter="url(#b4)"><path d="M131 5 L137 4 L138 23 L127 24Z" fill="#2b3f9a"/><path d="M143 4 L150 4 L153 14 L141 15Z" fill="#2a63c4"/><path d="M141 15 L153 14 L154 24 L140 24Z" fill="#e8c52a"/><path d="M157 2 L164 3 L167 30 L153 28Z" fill="#3c9a2a"/><circle cx="160" cy="12" r="2.600" fill="#b9d84a"/><path d="M150 30 C152 20 166 20 168 30 L176 40 V70 H150Z" fill="#17181a"/><path d="M164 18 C170 14 176 18 176 24 V40 H166Z" fill="#2a2620"/></g></g></svg><div class="abs" style="left:2.6px;top:2.9px;width:6px;height:5.4px;background:#2aa86b;border-radius:50% 50% 30% 30%"></div><svg class="abs" style="left:0;top:0;overflow:visible" width="1" height="1"><text x="9.08" y="8" textLength="14.88" lengthAdjust="spacingAndGlyphs" font-family="Liberation Sans,sans-serif" font-weight="bold" font-size="6.70391" fill="#2aa86b">СНАУ</text></svg><svg class="abs" style="left:0;top:0;overflow:visible" width="1" height="1"><text x="26.6" y="16.2" textLength="39.3" lengthAdjust="spacingAndGlyphs" font-family="Liberation Sans,sans-serif" font-weight="bold" font-size="5.1" fill="#6daa20">Основні блоки</text></svg><svg class="abs" style="left:0;top:0;overflow:visible" width="1" height="1"><text x="33.5" y="22.2" textLength="25" lengthAdjust="spacingAndGlyphs" font-family="Liberation Sans,sans-serif" font-weight="bold" font-size="5.1" fill="#6daa20">стратегії</text></svg><div class="abs" style="left:14.5px;top:24.5px;width:30px;height:29.5px;background:#ecedee;border-radius:14px 0 0 0"></div><div class="abs" style="left:47.5px;top:24.5px;width:30px;height:29.5px;background:#ecedee;border-radius:0 14px 0 0"></div><div class="abs" style="left:14.5px;top:56.5px;width:30px;height:29.5px;background:#ecedee;border-radius:0 0 0 14px"></div><div class="abs" style="left:47.5px;top:56.5px;width:30px;height:29.5px;background:#ecedee;border-radius:0 0 14px 0"></div><div class="abs" style="left:14.5px;top:24.5px;width:15.5px;height:14px;background:#6aaa1e;border-radius:14px 0 0 0"></div><div class="abs" style="left:62px;top:24.5px;width:15.5px;height:14px;background:#0f5a44;border-radius:0 14px 0 0"></div><div class="abs" style="left:14.5px;top:72px;width:15.5px;height:14px;background:#0f5a44;border-radius:0 0 0 14px"></div><div class="abs" style="left:62px;top:72px;width:15.5px;height:14px;background:#6aaa1e;border-radius:0 0 14px 0"></div><svg class="abs" style="left:0;top:0;overflow:visible" width="1" height="1"><text x="25.5" y="43.4" textLength="10" lengthAdjust="spacingAndGlyphs" font-family="Liberation Sans,sans-serif" font-weight="bold" font-size="3.1" fill="#222">Освіта</text></svg><svg class="abs" style="left:0;top:0;overflow:visible" width="1" height="1"><text x="53.5" y="43" textLength="13.5" lengthAdjust="spacingAndGlyphs" font-family="Liberation Sans,sans-serif" font-weight="bold" font-size="3.1" fill="#222">Наука та</text></svg><svg class="abs" style="left:0;top:0;overflow:visible" width="1" height="1"><text x="53.5" y="47.6" textLength="13.5" lengthAdjust="spacingAndGlyphs" font-family="Liberation Sans,sans-serif" font-weight="bold" font-size="3.1" fill="#222">інновації</text></svg><svg class="abs" style="left:0;top:0;overflow:visible" width="1" height="1"><text x="20" y="66.2" textLength="19" lengthAdjust="spacingAndGlyphs" font-family="Liberation Sans,sans-serif" font-weight="bold" font-size="3.1" fill="#222">Менеджмент</text></svg><svg class="abs" style="left:0;top:0;overflow:visible" width="1" height="1"><text x="53" y="64.6" textLength="16.5" lengthAdjust="spacingAndGlyphs" font-family="Liberation Sans,sans-serif" font-weight="bold" font-size="3.1" fill="#222">Третя місія</text></svg><svg class="abs" style="left:0;top:0;overflow:visible" width="1" height="1"><text x="52" y="69.2" textLength="19" lengthAdjust="spacingAndGlyphs" font-family="Liberation Sans,sans-serif" font-weight="bold" font-size="3.1" fill="#222">університету</text></svg><div class="abs" style="left:89.5px;top:24px;width:29.5px;height:29.5px;background:#6daa20;border-radius:3px"></div><div class="abs" style="left:121.5px;top:24px;width:29.5px;height:29.5px;background:#0f5a44;border-radius:3px"></div><div class="abs" style="left:89.5px;top:56px;width:29.5px;height:29.5px;background:#0f5a44;border-radius:3px"></div><div class="abs" style="left:121.5px;top:56px;width:29.5px;height:29.5px;background:#6daa20;border-radius:3px"></div><svg class="abs" style="left:0;top:0;overflow:visible" width="1" height="1"><text x="91" y="39.8" textLength="26.5" lengthAdjust="spacingAndGlyphs" font-family="Liberation Sans,sans-serif" font-weight="normal" font-size="2.8" fill="#dff0b0">Інтернаціоналізація</text></svg><svg class="abs" style="left:0;top:0;overflow:visible" width="1" height="1"><text x="127.5" y="37.6" textLength="17.5" lengthAdjust="spacingAndGlyphs" font-family="Liberation Sans,sans-serif" font-weight="normal" font-size="2.8" fill="#cfe8dc">Цифровий та</text></svg><svg class="abs" style="left:0;top:0;overflow:visible" width="1" height="1"><text x="125.5" y="41.8" textLength="21.5" lengthAdjust="spacingAndGlyphs" font-family="Liberation Sans,sans-serif" font-weight="normal" font-size="2.8" fill="#cfe8dc">зелений перехід</text></svg><svg class="abs" style="left:0;top:0;overflow:visible" width="1" height="1"><text x="95.5" y="69.6" textLength="17.5" lengthAdjust="spacingAndGlyphs" font-family="Liberation Sans,sans-serif" font-weight="normal" font-size="2.8" fill="#cfe8dc">Взаємодія зі</text></svg><svg class="abs" style="left:0;top:0;overflow:visible" width="1" height="1"><text x="93" y="73.8" textLength="22.5" lengthAdjust="spacingAndGlyphs" font-family="Liberation Sans,sans-serif" font-weight="normal" font-size="2.8" fill="#cfe8dc">стейкхолдерами</text></svg><svg class="abs" style="left:0;top:0;overflow:visible" width="1" height="1"><text x="123.5" y="69.6" textLength="25.5" lengthAdjust="spacingAndGlyphs" font-family="Liberation Sans,sans-serif" font-weight="normal" font-size="2.8" fill="#dff0b0">Рівність, доступність</text></svg><svg class="abs" style="left:0;top:0;overflow:visible" width="1" height="1"><text x="129" y="73.8" textLength="15" lengthAdjust="spacingAndGlyphs" font-family="Liberation Sans,sans-serif" font-weight="normal" font-size="2.8" fill="#dff0b0">та інклюзія</text></svg><div class="abs" style="left:0px;top:47px;width:4.5px;height:34px;background:linear-gradient(#8cc63f,#5e9e1e)"></div><svg class="abs" style="left:0;top:0;overflow:visible" width="1" height="1"><text x="97.5" y="90.8" textLength="49" lengthAdjust="spacingAndGlyphs" font-family="Liberation Sans,sans-serif" font-weight="bold" font-size="5.1" fill="#6daa20">Трендові напрями</text></svg><svg class="abs" style="left:0;top:0;overflow:visible" width="1" height="1"><text x="109.5" y="96.6" textLength="25" lengthAdjust="spacingAndGlyphs" font-family="Liberation Sans,sans-serif" font-weight="bold" font-size="5.1" fill="#6daa20">розвитку</text></svg></div>
<!-- thumb5 -->
<div class="abs" style="left:60.6px;top:736.2px;width:175.4px;height:98px;background:#fff;border-radius:3px;overflow:hidden;box-shadow:0 0 0 1px #d0d2d6;"><svg class="abs" style="left:0;top:0;overflow:visible" width="1" height="1"><text x="2.5" y="7.2" textLength="25.7" lengthAdjust="spacingAndGlyphs" font-family="Liberation Sans,sans-serif" font-weight="bold" font-size="7.3" fill="#14544a">Освіта</text></svg><svg class="abs" style="left:0;top:0;overflow:visible" width="1" height="1"><text x="2.9" y="11.6" textLength="53" lengthAdjust="spacingAndGlyphs" font-family="Liberation Sans,sans-serif" font-weight="bold" font-size="4.7" fill="#6daa20">Інтернаціоналізація</text></svg><div class="abs" style="left:107.5px;top:1.9px;width:6.875px;height:6.1px;background:#2aa86b;border-radius:50% 50% 30% 30%"></div><svg class="abs" style="left:0;top:0;overflow:visible" width="1" height="1"><text x="114.925" y="7.7" textLength="17.05" lengthAdjust="spacingAndGlyphs" font-family="Liberation Sans,sans-serif" font-weight="bold" font-size="7.68156" fill="#2aa86b">СНАУ</text></svg><svg class="abs" style="left:136px;top:0" width="40" height="30" viewBox="0 0 40 30"><path d="M2 0 H40 V30 C34 16 18 6 2 0Z" fill="#6aaa1e"/></svg><div class="abs" style="left:146px;top:15px;width:60px;height:62px;border-radius:50%;overflow:hidden;background:#2c2426;filter:blur(.35px)"><div class="abs" style="left:0px;top:18px;width:17px;height:28px;background:#e9e9ee;border-radius:40%"></div><div class="abs" style="left:10px;top:2px;width:26px;height:20px;background:#1e1a1c;border-radius:40%"></div><div class="abs" style="left:9px;top:10px;width:26px;height:40px;background:#c9a86a;border-radius:45%"></div><div class="abs" style="left:13px;top:15px;width:15px;height:22px;background:#e6c3a3;border-radius:45%"></div><div class="abs" style="left:6px;top:44px;width:54px;height:24px;background:#2a2224;border-radius:40% 0 0 0"></div><div class="abs" style="left:15px;top:48px;width:8px;height:14px;background:#8a1a22"></div></div><div class="abs" style="left:7px;top:13px;width:135.5px;height:37.5px;background:#f9b659;box-shadow:0 0 0 .6px #b98a2e inset"></div><div class="abs" style="left:27px;top:16.75px;width:107.5px;height:0.6px;background:#7a5a2a;opacity:.6"></div><div class="abs" style="left:27px;top:18.95px;width:107.5px;height:0.6px;background:#7a5a2a;opacity:.6"></div><div class="abs" style="left:27px;top:21.15px;width:107.5px;height:0.6px;background:#7a5a2a;opacity:.6"></div><div class="abs" style="left:13px;top:18.75px;width:2.4px;height:0.8px;background:#7a5a2a;opacity:.7"></div><div class="abs" style="left:7px;top:25.5px;width:135.5px;height:0.5px;background:#8c9a3c"></div><div class="abs" style="left:27px;top:29.25px;width:107.5px;height:0.6px;background:#7a5a2a;opacity:.6"></div><div class="abs" style="left:27px;top:31.45px;width:107.5px;height:0.6px;background:#7a5a2a;opacity:.6"></div><div class="abs" style="left:27px;top:33.65px;width:107.5px;height:0.6px;background:#7a5a2a;opacity:.6"></div><div class="abs" style="left:13px;top:31.25px;width:2.4px;height:0.8px;background:#7a5a2a;opacity:.7"></div><div class="abs" style="left:7px;top:38px;width:135.5px;height:0.5px;background:#8c9a3c"></div><div class="abs" style="left:27px;top:41.75px;width:107.5px;height:0.6px;background:#7a5a2a;opacity:.6"></div><div class="abs" style="left:27px;top:43.95px;width:107.5px;height:0.6px;background:#7a5a2a;opacity:.6"></div><div class="abs" style="left:27px;top:46.15px;width:107.5px;height:0.6px;background:#7a5a2a;opacity:.6"></div><div class="abs" style="left:13px;top:43.75px;width:2.4px;height:0.8px;background:#7a5a2a;opacity:.7"></div><div class="abs" style="left:21px;top:13px;width:0.5px;height:37.5px;background:#8c9a3c"></div><svg class="abs" style="left:0;top:0;overflow:visible" width="1" height="1"><text x="59.3" y="56" textLength="81.6" lengthAdjust="spacingAndGlyphs" font-family="Liberation Sans,sans-serif" font-weight="bold" font-size="5.4" fill="#6daa20">Цифровий та зелений перехід</text></svg><div class="abs" style="left:9.5px;top:58px;width:143.5px;height:60px;background:#72b41a"></div><div class="abs" style="left:31.5px;top:61.4px;width:109.5px;height:0.6px;background:#1e3a0a;opacity:.6"></div><div class="abs" style="left:31.5px;top:63.6px;width:109.5px;height:0.6px;background:#1e3a0a;opacity:.6"></div><div class="abs" style="left:15.5px;top:62.6px;width:2.4px;height:0.8px;background:#1e3a0a;opacity:.7"></div><div class="abs" style="left:9.5px;top:68.2px;width:143.5px;height:0.5px;background:#4f8a12"></div><div class="abs" style="left:31.5px;top:71.6px;width:109.5px;height:0.6px;background:#1e3a0a;opacity:.6"></div><div class="abs" style="left:31.5px;top:73.8px;width:109.5px;height:0.6px;background:#1e3a0a;opacity:.6"></div><div class="abs" style="left:15.5px;top:72.8px;width:2.4px;height:0.8px;background:#1e3a0a;opacity:.7"></div><div class="abs" style="left:9.5px;top:78.4px;width:143.5px;height:0.5px;background:#4f8a12"></div><div class="abs" style="left:31.5px;top:81.8px;width:109.5px;height:0.6px;background:#1e3a0a;opacity:.6"></div><div class="abs" style="left:31.5px;top:84px;width:109.5px;height:0.6px;background:#1e3a0a;opacity:.6"></div><div class="abs" style="left:15.5px;top:83px;width:2.4px;height:0.8px;background:#1e3a0a;opacity:.7"></div><div class="abs" style="left:9.5px;top:88.6px;width:143.5px;height:0.5px;background:#4f8a12"></div><div class="abs" style="left:31.5px;top:92px;width:109.5px;height:0.6px;background:#1e3a0a;opacity:.6"></div><div class="abs" style="left:31.5px;top:94.2px;width:109.5px;height:0.6px;background:#1e3a0a;opacity:.6"></div><div class="abs" style="left:15.5px;top:93.2px;width:2.4px;height:0.8px;background:#1e3a0a;opacity:.7"></div><div class="abs" style="left:9.5px;top:98.8px;width:143.5px;height:0.5px;background:#4f8a12"></div><div class="abs" style="left:31.5px;top:102.2px;width:109.5px;height:0.6px;background:#1e3a0a;opacity:.6"></div><div class="abs" style="left:31.5px;top:104.4px;width:109.5px;height:0.6px;background:#1e3a0a;opacity:.6"></div><div class="abs" style="left:15.5px;top:103.4px;width:2.4px;height:0.8px;background:#1e3a0a;opacity:.7"></div><div class="abs" style="left:23.5px;top:58px;width:0.5px;height:60px;background:#4f8a12"></div><div class="abs" style="left:0px;top:34px;width:4px;height:34px;background:linear-gradient(#8cc63f,#5e9e1e)"></div></div>
<div class="abs" style="left:60.6px;top:855.3px;width:175.4px;height:69.6px;background:#fff;border-radius:3px;overflow:hidden;box-shadow:0 0 0 1px #d0d2d6;border-radius:3px 3px 0 0"><svg class="abs" style="left:0;top:0;overflow:visible" width="1" height="1"><text x="2.5" y="7.2" textLength="25.7" lengthAdjust="spacingAndGlyphs" font-family="Liberation Sans,sans-serif" font-weight="bold" font-size="7.3" fill="#14544a">Освіта</text></svg><svg class="abs" style="left:0;top:0;overflow:visible" width="1" height="1"><text x="2.9" y="11.6" textLength="78.3" lengthAdjust="spacingAndGlyphs" font-family="Liberation Sans,sans-serif" font-weight="bold" font-size="4.7" fill="#6daa20">Взаємодія зі стейкхолдерами</text></svg><div class="abs" style="left:107.5px;top:1.9px;width:6.875px;height:6.1px;background:#2aa86b;border-radius:50% 50% 30% 30%"></div><svg class="abs" style="left:0;top:0;overflow:visible" width="1" height="1"><text x="114.925" y="7.7" textLength="17.05" lengthAdjust="spacingAndGlyphs" font-family="Liberation Sans,sans-serif" font-weight="bold" font-size="7.68156" fill="#2aa86b">СНАУ</text></svg><svg class="abs" style="left:136px;top:0" width="40" height="30" viewBox="0 0 40 30"><path d="M2 0 H40 V30 C34 16 18 6 2 0Z" fill="#6aaa1e"/></svg><div class="abs" style="left:146.500px;top:18px;width:52px;height:52px;border-radius:50%;overflow:hidden;background:#2a2022;filter:blur(.35px)"><div class="abs" style="left:8px;top:0px;width:44px;height:10px;background:#d8d6d4"></div><div class="abs" style="left:2px;top:8px;width:24px;height:22px;background:#1c1416;border-radius:45%"></div><div class="abs" style="left:8px;top:16px;width:13px;height:16px;background:#4a3228;border-radius:45%"></div><div class="abs" style="left:20px;top:18px;width:16px;height:20px;background:#3a2620;border-radius:45%"></div><div class="abs" style="left:-2px;top:34px;width:22px;height:30px;background:#e0262e;transform:skewX(-24deg)"></div><div class="abs" style="left:22px;top:42px;width:30px;height:20px;background:#c81e28;border-radius:40% 0 0 0"></div></div><div class="abs" style="left:6px;top:14.5px;width:143px;height:39px;background:#f9b659;box-shadow:0 0 0 .6px #b98a2e inset"></div><div class="abs" style="left:26px;top:17.975px;width:115px;height:0.6px;background:#7a5a2a;opacity:.6"></div><div class="abs" style="left:26px;top:20.175px;width:115px;height:0.6px;background:#7a5a2a;opacity:.6"></div><div class="abs" style="left:12px;top:18.875px;width:2.4px;height:0.8px;background:#7a5a2a;opacity:.7"></div><div class="abs" style="left:6px;top:24.25px;width:143px;height:0.5px;background:#8c9a3c"></div><div class="abs" style="left:26px;top:27.725px;width:115px;height:0.6px;background:#7a5a2a;opacity:.6"></div><div class="abs" style="left:26px;top:29.925px;width:115px;height:0.6px;background:#7a5a2a;opacity:.6"></div><div class="abs" style="left:12px;top:28.625px;width:2.4px;height:0.8px;background:#7a5a2a;opacity:.7"></div><div class="abs" style="left:6px;top:34px;width:143px;height:0.5px;background:#8c9a3c"></div><div class="abs" style="left:26px;top:37.475px;width:115px;height:0.6px;background:#7a5a2a;opacity:.6"></div><div class="abs" style="left:26px;top:39.675px;width:115px;height:0.6px;background:#7a5a2a;opacity:.6"></div><div class="abs" style="left:12px;top:38.375px;width:2.4px;height:0.8px;background:#7a5a2a;opacity:.7"></div><div class="abs" style="left:6px;top:43.75px;width:143px;height:0.5px;background:#8c9a3c"></div><div class="abs" style="left:26px;top:47.225px;width:115px;height:0.6px;background:#7a5a2a;opacity:.6"></div><div class="abs" style="left:26px;top:49.425px;width:115px;height:0.6px;background:#7a5a2a;opacity:.6"></div><div class="abs" style="left:12px;top:48.125px;width:2.4px;height:0.8px;background:#7a5a2a;opacity:.7"></div><div class="abs" style="left:20px;top:14.5px;width:0.5px;height:39px;background:#8c9a3c"></div><svg class="abs" style="left:0;top:0;overflow:visible" width="1" height="1"><text x="52" y="59.6" textLength="86.6" lengthAdjust="spacingAndGlyphs" font-family="Liberation Sans,sans-serif" font-weight="bold" font-size="5.4" fill="#6daa20">Рівність, доступність та інклюзія</text></svg><div class="abs" style="left:9.5px;top:62.5px;width:143.5px;height:60px;background:#72b41a"></div><div class="abs" style="left:31.5px;top:65.9px;width:109.5px;height:0.6px;background:#1e3a0a;opacity:.6"></div><div class="abs" style="left:31.5px;top:68.1px;width:109.5px;height:0.6px;background:#1e3a0a;opacity:.6"></div><div class="abs" style="left:15.5px;top:67.1px;width:2.4px;height:0.8px;background:#1e3a0a;opacity:.7"></div><div class="abs" style="left:9.5px;top:72.7px;width:143.5px;height:0.5px;background:#4f8a12"></div><div class="abs" style="left:31.5px;top:76.1px;width:109.5px;height:0.6px;background:#1e3a0a;opacity:.6"></div><div class="abs" style="left:31.5px;top:78.3px;width:109.5px;height:0.6px;background:#1e3a0a;opacity:.6"></div><div class="abs" style="left:15.5px;top:77.3px;width:2.4px;height:0.8px;background:#1e3a0a;opacity:.7"></div><div class="abs" style="left:9.5px;top:82.9px;width:143.5px;height:0.5px;background:#4f8a12"></div><div class="abs" style="left:31.5px;top:86.3px;width:109.5px;height:0.6px;background:#1e3a0a;opacity:.6"></div><div class="abs" style="left:31.5px;top:88.5px;width:109.5px;height:0.6px;background:#1e3a0a;opacity:.6"></div><div class="abs" style="left:15.5px;top:87.5px;width:2.4px;height:0.8px;background:#1e3a0a;opacity:.7"></div><div class="abs" style="left:9.5px;top:93.1px;width:143.5px;height:0.5px;background:#4f8a12"></div><div class="abs" style="left:31.5px;top:96.5px;width:109.5px;height:0.6px;background:#1e3a0a;opacity:.6"></div><div class="abs" style="left:31.5px;top:98.7px;width:109.5px;height:0.6px;background:#1e3a0a;opacity:.6"></div><div class="abs" style="left:15.5px;top:97.7px;width:2.4px;height:0.8px;background:#1e3a0a;opacity:.7"></div><div class="abs" style="left:9.5px;top:103.3px;width:143.5px;height:0.5px;background:#4f8a12"></div><div class="abs" style="left:31.5px;top:106.7px;width:109.5px;height:0.6px;background:#1e3a0a;opacity:.6"></div><div class="abs" style="left:31.5px;top:108.9px;width:109.5px;height:0.6px;background:#1e3a0a;opacity:.6"></div><div class="abs" style="left:15.5px;top:107.9px;width:2.4px;height:0.8px;background:#1e3a0a;opacity:.7"></div><div class="abs" style="left:23.5px;top:62.5px;width:0.5px;height:60px;background:#4f8a12"></div><div class="abs" style="left:0px;top:34px;width:4px;height:34px;background:linear-gradient(#8cc63f,#5e9e1e)"></div></div>
<div class="abs" style="left:255.5px;top:242.5px;width:18px;height:681.5px;background:#eff0f3;"></div>
<div class="abs" style="left:259.4px;top:257.6px;width:8.4px;height:244.6px;background:#757575;border-radius:4.2px"></div>
<svg class="abs" style="left:259px;top:246px;" width="9" height="7" viewBox="0 0 9 7" fill="none"><path d="M0.3 6.700 L4.600 0.400 L8.900 6.700Z" fill="#666"/></svg>
<svg class="abs" style="left:259px;top:913.5px;" width="9" height="7" viewBox="0 0 9 7" fill="none"><path d="M0.3 0.300 L4.600 6.600 L8.900 0.300Z" fill="#666"/></svg>
<div class="abs" style="left:273.6px;top:242.5px;width:1px;height:681.5px;background:#dcdee2;"></div>
<div class="abs" style="left:1488px;top:297.5px;width:7.5px;height:40px;background:#6f6f6f;border-radius:3.8px"></div>
<svg class="abs" style="left:1487px;top:247px;" width="9" height="6" viewBox="0 0 9 6" fill="none"><path d="M0.5 5.5 L4.5 0.8 L8.5 5.5Z" fill="#666"/></svg>
<svg class="abs" style="left:1487px;top:861px;" width="9" height="6" viewBox="0 0 9 6" fill="none"><path d="M0.5 0.5 L4.5 5.2 L8.5 0.5Z" fill="#666"/></svg>
<svg class="abs" style="left:1487px;top:874px;" width="9" height="12" viewBox="0 0 9 12" fill="none"><path d="M0.5 5.5 L4.5 0.8 L8.5 5.5Z M0.5 11 L4.5 6.3 L8.5 11Z" fill="#666"/></svg>
<svg class="abs" style="left:1487px;top:890px;" width="9" height="12" viewBox="0 0 9 12" fill="none"><path d="M0.5 0.8 L4.5 5.5 L8.5 0.8Z M0.5 6.3 L4.5 11 L8.5 6.3Z" fill="#666"/></svg>
<div class="abs" style="left:26px;top:924px;width:1474px;height:22px;background:#f5f5f5;border-top:1px solid #d9dade"></div>
<div class="t" style="left:37.80px;top:929.16px;font:normal normal 10.5px/14px 'Liberation Sans',sans-serif;color:#444;transform:scaleX(0.9068);transform-origin:0 0;">Слайд 2 з 15</div>
<div class="t" style="left:127.00px;top:929.16px;font:normal normal 10.5px/14px 'Liberation Sans',sans-serif;color:#444;transform:scaleX(0.9375);transform-origin:0 0;">українська</div>
<svg class="abs" style="left:192px;top:928.5px;" width="14" height="14" viewBox="0 0 14 14" fill="none"><circle cx="6" cy="2.4" r="1.5" stroke="#444" stroke-width="0.9"/><path d="M1 4.6 L6 5.8 L11 4.6 M6 5.8 V9 M6 9 L3.4 13 M6 9 L7.4 11" stroke="#444" stroke-width="0.9" stroke-linecap="round"/><path d="M8.4 10.8 L10.2 12.6 L13.4 8.8" stroke="#444" stroke-width="1"/></svg>
<div class="t" style="left:209.30px;top:929.16px;font:normal normal 10.5px/14px 'Liberation Sans',sans-serif;color:#444;transform:scaleX(0.9384);transform-origin:0 0;">Спеціальні можливості: усе добре</div>
<svg class="abs" style="left:1085px;top:928px;" width="16" height="14" viewBox="0 0 16 14" fill="none"><path d="M4.6 3.6 L8 1 L11.4 3.6" stroke="#444" stroke-width="1"/><path d="M1 6.4 H15 M1 9.4 H15 M1 12.4 H15" stroke="#444" stroke-width="1"/></svg>
<div class="t" style="left:1102.70px;top:929.16px;font:normal normal 10.5px/14px 'Liberation Sans',sans-serif;color:#444;transform:scaleX(0.9158);transform-origin:0 0;">Нотатки</div>
<div class="abs" style="left:1158px;top:925px;width:37.6px;height:21px;background:#d9d9d9;"></div>
<svg class="abs" style="left:1169px;top:929.5px;" width="16" height="12" viewBox="0 0 16 12" fill="none"><rect x="0.6" y="0.6" width="14.8" height="10.8" stroke="#444" stroke-width="1.1"/><rect x="5" y="3" width="8" height="4.4" stroke="#444" stroke-width="1"/><path d="M2.8 0.6 V11.4" stroke="#444" stroke-width="1"/></svg>
<svg class="abs" style="left:1207.5px;top:929.5px;" width="15" height="12" viewBox="0 0 15 12" fill="none"><rect x="0.6" y="0.6" width="5.2" height="4" stroke="#555" stroke-width="1"/><rect x="8.6" y="0.6" width="5.2" height="4" stroke="#555" stroke-width="1"/><rect x="0.6" y="7.2" width="5.2" height="4" stroke="#555" stroke-width="1"/><rect x="8.6" y="7.2" width="5.2" height="4" stroke="#555" stroke-width="1"/></svg>
<svg class="abs" style="left:1246.5px;top:929px;" width="15" height="13" viewBox="0 0 15 13" fill="none"><path d="M7.5 2 C5.5 0.6 2.6 0.6 0.8 1.4 V11.4 C2.6 10.6 5.5 10.6 7.5 12 C9.5 10.6 12.4 10.6 14.2 11.4 V1.4 C12.4 0.6 9.5 0.6 7.5 2Z M7.5 2 V12" stroke="#555" stroke-width="1"/><path d="M2.6 3.6 H5.6 M2.6 5.8 H5.6 M2.6 8 H5.6 M9.4 3.6 H12.4 M9.4 5.8 H12.4 M9.4 8 H12.4" stroke="#555" stroke-width="0.8"/></svg>
<svg class="abs" style="left:1284px;top:929px;" width="15" height="13" viewBox="0 0 15 13" fill="none"><path d="M0.6 1 H14.4 M1.8 1 V7.6 H13.2 V1 M7.5 7.6 V11.6 M4.4 12 H10.6" stroke="#555" stroke-width="1.1"/></svg>
<div class="abs" style="left:1317px;top:934.8px;width:6.5px;height:1px;background:#555;"></div>
<div class="abs" style="left:1329px;top:935px;width:96px;height:1px;background:#777;"></div>
<div class="abs" style="left:1373px;top:929.5px;width:3.6px;height:11.5px;background:#555;"></div>
<div class="abs" style="left:1430px;top:934.8px;width:7px;height:1px;background:#555;"></div>
<div class="abs" style="left:1433px;top:931.8px;width:1px;height:7px;background:#555;"></div>
<div class="t" style="left:1449.50px;top:929.53px;font:normal normal 10px/13px 'Liberation Sans',sans-serif;color:#444;transform:scaleX(0.9393);transform-origin:0 0;">95%</div>
<svg class="abs" style="left:1481px;top:928.5px;" width="15" height="14" viewBox="0 0 15 14" fill="none"><rect x="5" y="4.6" width="4.800" height="5" stroke="#555" stroke-width="1"/><path d="M5.600 2.400 L7.400 0.700 L9.200 2.400 M5.600 11.800 L7.400 13.500 L9.200 11.800 M3.200 4.800 L0.700 7.100 L3.200 9.400 M11.600 4.800 L14.100 7.100 L11.600 9.400" stroke="#555" stroke-width="1"/></svg>
<div class="abs" style="left:818.5px;top:67.5px;width:283px;height:57px;background:#2a2b2d;border:1px solid #3d3e40;border-radius:11px;box-shadow:0 1px 4px rgba(0,0,0,.4)"></div>
<div class="t" style="left:841.00px;top:86.26px;font:normal normal 16px/21px 'Liberation Sans',sans-serif;color:#fff;transform:scaleX(0.9932);transform-origin:0 0;">Strelnyk Viktoria разговаривает...</div>
<!-- ===== participants gallery ===== -->
<div class="abs" style="left:1680px;top:95px;width:92.5px;height:43px;background:#161617;border-radius:9px 9px 0 0"></div>
<svg class="abs" style="left:1717px;top:110.5px;" width="19" height="11" viewBox="0 0 19 11" fill="none"><path d="M1.5 9.5 L9.5 1.8 L17.5 9.5" stroke="#8d8ea0" stroke-width="2.2" stroke-linecap="round" stroke-linejoin="round"/></svg>
<div class="abs" style="left:1524px;top:481px;width:5.1px;height:50px;background:#747979;"></div>
<div class="abs" style="left:1617px;top:137px;width:220px;height:123px;background:#242526;border-radius:10px 10px 0 0"></div>
<svg class="abs" style="left:1680px;top:137px" width="93" height="123" viewBox="0 0 93 123"><defs><radialGradient id="g1" cx="47%" cy="33%" r="62%"><stop offset="0" stop-color="#484e4e"/><stop offset=".5" stop-color="#2f3433"/><stop offset="1" stop-color="#151817"/></radialGradient><filter id="bl1"><feGaussianBlur stdDeviation="2.2"/></filter></defs><rect width="93" height="123" fill="url(#g1)"/><g filter="url(#bl1)"><ellipse cx="32" cy="86" rx="22" ry="17" fill="#4c3226"/><ellipse cx="19" cy="95" rx="9" ry="8" fill="#6e544c"/><ellipse cx="44" cy="100" rx="13" ry="12" fill="#402c20"/><ellipse cx="92" cy="54" rx="2.500" ry="12" fill="#5a625f"/><rect x="0" y="105" width="93" height="20" fill="#1c1c1c"/></g></svg>
<div class="abs" style="left:1620.7px;top:233.6px;width:176.3px;height:24.4px;background:rgba(42,43,45,.9);border-radius:6px"></div>
<svg class="abs" style="left:1624.6px;top:237.2px;" width="17" height="17" viewBox="0 0 17 17" fill="none"><rect x="5.6" y="1.2" width="5.8" height="9.4" rx="2.9" fill="#e5484d"/><path d="M3.2 8 C3.2 11.6 5.6 13 8.5 13 C11.4 13 13.8 11.6 13.8 8" stroke="#e5484d" stroke-width="1.5" fill="none"/><path d="M8.5 13 V15.6 M5.6 15.8 H11.4" stroke="#e5484d" stroke-width="1.5"/><path d="M1.2 16 L15.6 0.8" stroke="#222324" stroke-width="3.4"/><path d="M1.2 16 L15.6 0.8" stroke="#f0545a" stroke-width="1.4" stroke-linecap="round"/></svg>
<div class="t" style="left:1648.70px;top:236.60px;font:normal normal 15px/20px 'Liberation Sans',sans-serif;color:#fff;transform:scaleX(1.0366);transform-origin:0 0;">Татьяна Мироненко</div>
<svg class="abs" style="left:1617px;top:261px" width="220" height="124" viewBox="0 0 220 124"><defs><filter id="bl2"><feGaussianBlur stdDeviation=".8"/></filter><linearGradient id="w2" x1="0" x2="1"><stop offset="0" stop-color="#d8d5c8"/><stop offset=".5" stop-color="#dedbd0"/><stop offset=".52" stop-color="#e8e6dc"/><stop offset="1" stop-color="#e2dfd4"/></linearGradient><linearGradient id="f2" x1="0" x2="1"><stop offset="0" stop-color="#2672c6"/><stop offset=".5" stop-color="#3b93e2"/><stop offset="1" stop-color="#2a7cd0"/></linearGradient></defs>
<rect width="220" height="124" fill="url(#w2)"/>
<g filter="url(#bl2)">
<rect x="0" y="0" width="15" height="124" fill="#eff0ee"/>
<path d="M155 0 H220 V14 H182 L155 4Z" fill="#f0efe9"/>
<rect x="183" y="14" width="29.500" height="39" fill="#96988c"/><rect x="183" y="53" width="29.500" height="71" fill="#a4521f"/><rect x="212.500" y="8" width="8" height="116" fill="#70361a"/><path d="M199 31 h6 v9 l-3 3 l-3 -3Z" fill="#2a4a9a"/>
<path d="M52 2 L56 2 C62 20 67 38 70 56 C74 74 77 90 78 124 H22 C24 100 34 60 52 2Z" fill="url(#f2)"/>
<circle cx="53.500" cy="16" r="6.400" fill="#e6eaf2"/><circle cx="53.500" cy="16" r="3.600" fill="#2a62b8"/><circle cx="53.500" cy="16" r="6.400" fill="none" stroke="#c8b45a" stroke-width=".8"/>
<path d="M58.3 44.4 L62.9 54.6 L74.1 54.4 L70.1 64.9 L78.1 72.8 L67.9 77.4 L68.1 88.6 L57.6 84.6 L49.7 92.6 L45.1 82.4 L33.9 82.6 L37.9 72.1 L29.9 64.2 L40.1 59.6 L39.9 48.4 L50.4 52.4Z" fill="#f1f2f5"/>
<path d="M46 57 C52 59 58 58 64 54 C68 58 72 62 74 64 C74 76 70 86 62 92 C54 90 48 84 45 76 C47 70 47 64 46 57Z" fill="#2358b4"/>
<path d="M53 66 L56 76 L60 66 L63 76 L66 64 M56 76 C56 82 60 84 60 88 C62 84 64 80 63 76" stroke="#f1cf2e" stroke-width="1.800" fill="none" stroke-linejoin="round"/>
<rect x="102.300" y="2" width="1.600" height="8" fill="#b89a4a"/>
<path d="M103 7 L110 10 L111.500 62 L108 70 L84.500 69Z" fill="#2b8ad8"/>
<path d="M137 10 H153 V34 C153 39 147 41 145 43 C143 41 137 39 137 34Z" fill="#2a56a8"/><path d="M141 15 V30 C141 33 144 34 145 37 C146 34 149 33 149 30 V15 L147 20 V29 H143 V20Z" stroke="#d9b82a" stroke-width="1.100" fill="none"/>
<rect x="80" y="62" width="37" height="40" rx="10" fill="#15171a"/><rect x="84" y="59" width="29" height="14" rx="6" fill="#1e2125"/>
<path d="M124 60 C122 44 134 40 141 41 C150 40 158 46 156 62 C156 70 154 76 152 80 L130 80 C124 86 118 86 113 84 C120 78 124 70 124 60Z" fill="#d8c398"/>
<path d="M128.500 62 C128.500 50 152.500 50 152.500 62 C152.500 74 148 84 140.500 86 C133 84 128.500 74 128.500 62Z" fill="#e3bfa6"/><path d="M127 58 C130 46 152 46 154 58 C148 52 134 52 127 58Z" fill="#d6c090"/>
<path d="M132.500 63 h5 M144 63 h5" stroke="#4a3a30" stroke-width="1.400"/><path d="M140.500 66 v6" stroke="#c9a088" stroke-width="1"/><path d="M137 77 h7" stroke="#b0605a" stroke-width="1.600"/>
<path d="M100 124 C101 98 112 86 128 80 L134 84 C138 90 144 90 148 84 L154 80 C164 84 168 96 169 124Z" fill="#131417"/>
<path d="M0 84 L21 83 L23 98 H0Z" fill="#ecebe6"/><rect x="0" y="97" width="40" height="27" fill="#2a2a2c"/>
</g></svg>
<div class="abs" style="left:1620.7px;top:357.5px;width:216.3px;height:24.6px;background:rgba(42,43,45,.88);border-radius:6px 0 0 6px"></div>
<svg class="abs" style="left:1624.6px;top:361.2px;" width="17" height="17" viewBox="0 0 17 17" fill="none"><rect x="5.6" y="1.2" width="5.8" height="9.4" rx="2.9" fill="#e5484d"/><path d="M3.2 8 C3.2 11.6 5.6 13 8.5 13 C11.4 13 13.8 11.6 13.8 8" stroke="#e5484d" stroke-width="1.5" fill="none"/><path d="M8.5 13 V15.6 M5.6 15.8 H11.4" stroke="#e5484d" stroke-width="1.5"/><path d="M1.2 16 L15.6 0.8" stroke="#222324" stroke-width="3.4"/><path d="M1.2 16 L15.6 0.8" stroke="#f0545a" stroke-width="1.4" stroke-linecap="round"/></svg>
<div class="t" style="left:1648.70px;top:361.20px;font:normal normal 15px/20px 'Liberation Sans',sans-serif;color:#fff;transform:scaleX(0.9899);transform-origin:0 0;">Сумський НДЕКЦ МВС ...</div>
<div class="abs" style="left:1617px;top:385px;width:220px;height:124px;background:#242526;"></div>
<svg class="abs" style="left:1680px;top:385px" width="93" height="124" viewBox="0 0 93 124"><defs><filter id="bl3"><feGaussianBlur stdDeviation=".6"/></filter><pattern id="hz" width="2.6" height="2.6" patternUnits="userSpaceOnUse"><rect width="2.6" height="2.6" fill="#dcdcd8"/><rect width="1.3" height="1.3" fill="#3c3c3c"/><rect x="1.3" y="1.3" width="1.3" height="1.3" fill="#555"/></pattern></defs>
<rect width="93" height="124" fill="#dedede"/><g filter="url(#bl3)"><path d="M0 0 H24 V124 H0Z" fill="#cacaca"/><path d="M0 0 H93 L93 4 L30 14 L24 10Z" fill="#ebebeb"/>
<path d="M6 124 C8 96 14 80 38 66 L62 66 C84 78 92 92 93 124Z" fill="url(#hz)"/>
<path d="M42 62 H58 L57 70 L50 80 L43 70Z" fill="#d9ae94"/>
<path d="M40 72 L50 80 L60 72 L66 124 H40Z" fill="#17181a"/>
<path d="M40 66 L20 96 L38 124 H44 L41 96Z" fill="url(#hz)" stroke="#777" stroke-width=".7"/><path d="M60 66 L82 94 L66 124 H62 L63 96Z" fill="url(#hz)" stroke="#777" stroke-width=".7"/>
<ellipse cx="49.500" cy="49" rx="11.500" ry="15" fill="#d9ae94"/>
<path d="M36 50 C33 30 46 23 58 27 C67 30 66 42 62 47 C59 38 50 35 42 39 C39 43 38 47 38 53Z" fill="#2a2422"/>
<path d="M43.500 48 h4.500 M52.500 48 h4.500" stroke="#3a2a24" stroke-width="1.1"/><path d="M46.500 58 h6" stroke="#a0605a" stroke-width="1.2"/>
</g></svg>
<div class="abs" style="left:1620.7px;top:482px;width:171px;height:24.4px;background:rgba(42,43,45,.9);border-radius:6px"></div>
<svg class="abs" style="left:1624.6px;top:485.6px;" width="17" height="17" viewBox="0 0 17 17" fill="none"><rect x="5.6" y="1.2" width="5.8" height="9.4" rx="2.9" fill="#e5484d"/><path d="M3.2 8 C3.2 11.6 5.6 13 8.5 13 C11.4 13 13.8 11.6 13.8 8" stroke="#e5484d" stroke-width="1.5" fill="none"/><path d="M8.5 13 V15.6 M5.6 15.8 H11.4" stroke="#e5484d" stroke-width="1.5"/><path d="M1.2 16 L15.6 0.8" stroke="#222324" stroke-width="3.4"/><path d="M1.2 16 L15.6 0.8" stroke="#f0545a" stroke-width="1.4" stroke-linecap="round"/></svg>
<div class="t" style="left:1648.70px;top:484.50px;font:normal normal 15px/20px 'Liberation Sans',sans-serif;color:#fff;transform:scaleX(1.0344);transform-origin:0 0;">Оксана Соп'яненко</div>
<svg class="abs" style="left:1677.5px;top:522px;border-radius:8px" width="98.500" height="98.500" viewBox="0 0 98.500 98.500"><defs><filter id="bl4"><feGaussianBlur stdDeviation=".7"/></filter></defs>
<rect width="99" height="99" fill="#e4e2de"/><g filter="url(#bl4)">
<rect x="0" y="0" width="54" height="99" fill="#7c3c30"/><rect x="0" y="0" width="9" height="99" fill="#8a4a3a"/><path d="M27 2 V70 M9 30 V80" stroke="#552418" stroke-width="1.3" stroke-dasharray="1.500 3"/><path d="M23 20 l3 6" stroke="#3a1a12" stroke-width="1.500"/>
<rect x="54" y="0" width="45" height="40" fill="#ebeae6"/>
<path d="M70 30 C74 23 88 23 92 27 L97 32 V99 H70Z" fill="#b7803f"/><path d="M74 36 C76 30 86 30 88 38 V78 H74Z" fill="#3a2620"/><rect x="88" y="30" width="5" height="55" fill="#c99a58"/>
<path d="M45 34 C45 18 68 18 70 36 C72 50 70 58 66 64 L62 50 L56 52 C56 62 52 72 46 80 C42 66 43 50 45 34Z" fill="#eadcae"/>
<ellipse cx="58.500" cy="35" rx="6.500" ry="9" fill="#eac8b2"/><path d="M51 30 C53 22 65 22 67 32 C63 26 55 26 51 30Z" fill="#e4d49e"/>
<path d="M55.500 34 h2.500 M60.500 34 h2.500" stroke="#4a3a30" stroke-width=".9"/><path d="M57 40.500 h4" stroke="#b0605a" stroke-width="1"/>
<path d="M33 84 C35 62 44 50 54 47 L58 52 L64 47 C76 50 82 62 82 84Z" fill="#9ba2a8"/>
<path d="M54 48 C55 58 63 60 66 48" stroke="#c02a3a" stroke-width="2.200" fill="none"/>
<path d="M0 78 L99 70 V99 H0Z" fill="#c28c48"/><path d="M30 80 L72 76 L78 84 L34 88Z" fill="#e9e7e2"/>
<rect x="14" y="69" width="4.500" height="13" rx="1.500" fill="#e6ecee"/><rect x="20" y="71" width="4.500" height="12" rx="1.500" fill="#d6e4ea"/><rect x="27" y="70" width="5" height="13" rx="1.500" fill="#b8d8c8"/>
<path d="M60 86 L80 84 L82 92 L62 94Z" fill="#3a6a9a"/>
</g></svg>
<div class="abs" style="left:1620.7px;top:605.6px;width:131.3px;height:24.4px;background:rgba(42,43,45,.9);border-radius:6px"></div>
<svg class="abs" style="left:1624.6px;top:609.2px;" width="17" height="17" viewBox="0 0 17 17" fill="none"><rect x="5.6" y="1.2" width="5.8" height="9.4" rx="2.9" fill="#e5484d"/><path d="M3.2 8 C3.2 11.6 5.6 13 8.5 13 C11.4 13 13.8 11.6 13.8 8" stroke="#e5484d" stroke-width="1.5" fill="none"/><path d="M8.5 13 V15.6 M5.6 15.8 H11.4" stroke="#e5484d" stroke-width="1.5"/><path d="M1.2 16 L15.6 0.8" stroke="#222324" stroke-width="3.4"/><path d="M1.2 16 L15.6 0.8" stroke="#f0545a" stroke-width="1.4" stroke-linecap="round"/></svg>
<div class="t" style="left:1648.70px;top:608.10px;font:normal normal 15px/20px 'Liberation Sans',sans-serif;color:#fff;transform:scaleX(1.0229);transform-origin:0 0;">Alona Klochko</div>
<svg class="abs" style="left:1677.5px;top:644.5px;border-radius:8px" width="98.500" height="98.500" viewBox="0 0 98.500 98.500"><defs><filter id="bl5"><feGaussianBlur stdDeviation=".6"/></filter><linearGradient id="w5" x1="0" x2="1"><stop offset="0" stop-color="#dfe4e6"/><stop offset="1" stop-color="#eef0f1"/></linearGradient></defs>
<rect width="99" height="99" fill="url(#w5)"/><g filter="url(#bl5)">
<path d="M36 0 H68 C70 12 66 28 60 34 C56 38 48 38 44 34 C38 28 34 12 36 0Z" fill="#d9ae90"/>
<path d="M34 0 H70 C70 4 69 8 68 10 C62 2 44 2 38 10 C36 8 35 4 34 0Z" fill="#5a4a3a"/>
<path d="M42 14 h6 M56 14 h6" stroke="#3a2a22" stroke-width="1.200"/><path d="M47 27 h10" stroke="#9a5a50" stroke-width="1.200"/>
<path d="M4 99 C4 60 8 48 22 42 L42 32 L52 44 L62 32 L82 42 C94 48 96 60 97 99Z" fill="#24262c"/>
<path d="M42 32 L52 46 L62 32 L58 30 C56 36 48 36 46 30Z" fill="#f4f4f4"/><path d="M46 40 L52 46 L58 40 L60 84 H44Z" fill="#eef0f0"/>
<path d="M49 43 H55 L58 84 H47Z" fill="#8a7648"/><path d="M49 50 L57 56 M48 60 L58 67 M48 71 L58 78" stroke="#3a3424" stroke-width="1.800"/>
<path d="M40 34 L50 84 L30 60Z" fill="#1c1d22"/><path d="M64 34 L56 84 L74 60Z" fill="#1c1d22"/>
<path d="M6 99 C10 84 30 76 52 82 C74 76 92 84 96 99Z" fill="#1f2126"/>
<path d="M26 78 C32 74 40 76 44 82 C38 84 30 84 26 78Z" fill="#d9ae90"/>
</g></svg>
<div class="abs" style="left:1620.7px;top:729.4px;width:180.9px;height:24.4px;background:rgba(42,43,45,.9);border-radius:6px"></div>
<svg class="abs" style="left:1624.6px;top:733px;" width="17" height="17" viewBox="0 0 17 17" fill="none"><rect x="5.6" y="1.2" width="5.8" height="9.4" rx="2.9" fill="#e5484d"/><path d="M3.2 8 C3.2 11.6 5.6 13 8.5 13 C11.4 13 13.8 11.6 13.8 8" stroke="#e5484d" stroke-width="1.5" fill="none"/><path d="M8.5 13 V15.6 M5.6 15.8 H11.4" stroke="#e5484d" stroke-width="1.5"/><path d="M1.2 16 L15.6 0.8" stroke="#222324" stroke-width="3.4"/><path d="M1.2 16 L15.6 0.8" stroke="#f0545a" stroke-width="1.4" stroke-linecap="round"/></svg>
<div class="t" style="left:1648.70px;top:731.50px;font:normal normal 15px/20px 'Liberation Sans',sans-serif;color:#fff;transform:scaleX(1.0546);transform-origin:0 0;">Юрій Котвяковський</div>
<div class="t" style="left:1624.80px;top:803.56px;font:normal bold 21.5px/28px 'DejaVu Sans','Liberation Sans',sans-serif;color:#fff;transform:scaleX(0.9233);transform-origin:0 0;">Микола  Шапов...</div>
<div class="abs" style="left:1620.7px;top:852.8px;width:157.3px;height:24.4px;background:rgba(42,43,45,.9);border-radius:6px"></div>
<svg class="abs" style="left:1624.6px;top:856.4px;" width="17" height="17" viewBox="0 0 17 17" fill="none"><rect x="5.6" y="1.2" width="5.8" height="9.4" rx="2.9" fill="#e5484d"/><path d="M3.2 8 C3.2 11.6 5.6 13 8.5 13 C11.4 13 13.8 11.6 13.8 8" stroke="#e5484d" stroke-width="1.5" fill="none"/><path d="M8.5 13 V15.6 M5.6 15.8 H11.4" stroke="#e5484d" stroke-width="1.5"/><path d="M1.2 16 L15.6 0.8" stroke="#222324" stroke-width="3.4"/><path d="M1.2 16 L15.6 0.8" stroke="#f0545a" stroke-width="1.4" stroke-linecap="round"/></svg>
<div class="t" style="left:1648.70px;top:855.60px;font:normal normal 15px/20px 'Liberation Sans',sans-serif;color:#fff;transform:scaleX(1.0287);transform-origin:0 0;">Микола Шаповал</div>
<!-- ===== zoom bottom toolbar ===== -->
<div class="abs" style="left:0px;top:946px;width:1919px;height:74px;background:#000;"></div>
<svg class="abs" style="left:50px;top:957px;" width="32" height="33" viewBox="0 0 32 33" fill="none"><rect x="11.200" y="2.400" width="9.800" height="19.600" rx="4.900" stroke="#fff" stroke-width="1.700"/><path d="M7.200 16 C7.200 22.500 11 25.400 16.100 25.400 C21.200 25.400 25 22.500 25 16" stroke="#fff" stroke-width="1.700" stroke-linecap="round"/><path d="M16.100 25.600 V30.400 M11.200 30.800 H21" stroke="#fff" stroke-width="1.700" stroke-linecap="round"/><path d="M2.200 30.400 L30 3" stroke="#000" stroke-width="5.500"/><path d="M2.200 30.400 L30 3" stroke="#ea2f62" stroke-width="3" stroke-linecap="round"/></svg>
<div class="t" style="left:50.30px;top:993.36px;font:normal bold 15.4px/20px 'Liberation Sans',sans-serif;color:#fff;transform:scaleX(0.8947);transform-origin:0 0;-webkit-text-stroke:0.2px #000">Звук</div>
<svg class="abs" style="left:100.3px;top:969.7px;" width="10.5" height="7.5" viewBox="0 0 10.5 7.5" fill="none"><path d="M1.2 6.2 L5.25 1.8 L9.3 6.2" stroke="#fff" stroke-width="1.9" stroke-linecap="round" stroke-linejoin="round"/></svg>
<svg class="abs" style="left:166px;top:964px;" width="33" height="21" viewBox="0 0 33 21" fill="none"><rect x="1.600" y="1.800" width="20.400" height="17" rx="4.200" stroke="#fff" stroke-width="1.800"/><path d="M24 8 L30.600 4.200 V16.600 L24 12.800Z" stroke="#fff" stroke-width="1.700" stroke-linejoin="round"/></svg>
<div class="t" style="left:160.80px;top:993.36px;font:normal bold 15.4px/20px 'Liberation Sans',sans-serif;color:#fff;transform:scaleX(0.8838);transform-origin:0 0;-webkit-text-stroke:0.2px #000">Видео</div>
<svg class="abs" style="left:222.9px;top:969.7px;" width="10.5" height="7.5" viewBox="0 0 10.5 7.5" fill="none"><path d="M1.2 6.2 L5.25 1.8 L9.3 6.2" stroke="#fff" stroke-width="1.9" stroke-linecap="round" stroke-linejoin="round"/></svg>
<svg class="abs" style="left:546.5px;top:962.5px;" width="25" height="24" viewBox="0 0 25 24" fill="none"><circle cx="8.200" cy="5.200" r="3.600" stroke="#fff" stroke-width="1.700"/><rect x="1.200" y="13.200" width="16.800" height="9.400" rx="4.700" stroke="#fff" stroke-width="1.700"/><circle cx="18.200" cy="8.600" r="2.900" stroke="#fff" stroke-width="1.600"/><path d="M20.600 14.400 C23 14.800 23.800 16.400 23.800 18 C23.800 20 22.600 21.400 20.800 21.400" stroke="#fff" stroke-width="1.600" stroke-linecap="round"/></svg>
<div class="t" style="left:580.30px;top:962.28px;font:normal normal 14.5px/19px 'Liberation Sans',sans-serif;color:#b9bdcc;transform:scaleX(0.8674);transform-origin:0 0;">14</div>
<svg class="abs" style="left:619.9px;top:969.3px;" width="10.5" height="7.5" viewBox="0 0 10.5 7.5" fill="none"><path d="M1.2 6.2 L5.25 1.8 L9.3 6.2" stroke="#fff" stroke-width="1.9" stroke-linecap="round" stroke-linejoin="round"/></svg>
<div class="t" style="left:522.00px;top:993.36px;font:normal bold 15.4px/20px 'Liberation Sans',sans-serif;color:#fff;transform:scaleX(0.9305);transform-origin:0 0;-webkit-text-stroke:0.2px #000">Участники</div>
<svg class="abs" style="left:682px;top:959.6px;" width="29" height="29" viewBox="0 0 29 29" fill="none"><path d="M10.500 5.600 C10.500 2.800 12.200 1.200 15 1.200 H23.600 C26.200 1.200 27.600 2.800 27.600 5.200 V12.600 C27.600 15.400 25.800 16.600 23.800 16.600" stroke="#fff" stroke-width="1.700" stroke-linecap="round"/><path d="M5.600 6.400 H18.600 C21.400 6.400 22.800 8 22.800 10.400 V18 C22.800 20.600 21.200 22 18.600 22 H11.600 L6.600 26.600 V22 H5.600 C2.800 22 1.400 20.400 1.400 18 V10.400 C1.400 8 2.800 6.400 5.600 6.400Z" stroke="#fff" stroke-width="1.700" stroke-linejoin="round" fill="#000"/><circle cx="7.600" cy="14.200" r="1.250" fill="#fff"/><circle cx="12.100" cy="14.200" r="1.250" fill="#fff"/><circle cx="16.600" cy="14.200" r="1.250" fill="#fff"/></svg>
<div class="t" style="left:685.50px;top:993.36px;font:normal bold 15.4px/20px 'Liberation Sans',sans-serif;color:#fff;transform:scaleX(0.8506);transform-origin:0 0;-webkit-text-stroke:0.2px #000">Чат</div>
<svg class="abs" style="left:732.9px;top:969.5px;" width="10.5" height="7.5" viewBox="0 0 10.5 7.5" fill="none"><path d="M1.2 6.2 L5.25 1.8 L9.3 6.2" stroke="#fff" stroke-width="1.9" stroke-linecap="round" stroke-linejoin="round"/></svg>
<svg class="abs" style="left:799.5px;top:960.5px;" width="33" height="28" viewBox="0 0 33 28" fill="none"><g transform="rotate(-12 16.500 14)"><path d="M16.500 24.800 C10 20.600 3.600 15.600 3.600 9.600 C3.600 5.600 6.600 3 9.800 3 C12.600 3 15 4.600 16.500 7.400 C18 4.600 20.400 3 23.200 3 C26.400 3 29.400 5.600 29.400 9.600 C29.400 15.600 23 20.600 16.500 24.800Z" stroke="#fff" stroke-width="1.700" stroke-linejoin="round"/></g></svg>
<div class="t" style="left:764.00px;top:993.36px;font:normal bold 15.4px/20px 'Liberation Sans',sans-serif;color:#fff;transform:scaleX(0.9062);transform-origin:0 0;-webkit-text-stroke:0.2px #000">Отреагировать</div>
<svg class="abs" style="left:858px;top:969.5px;" width="10.5" height="7.5" viewBox="0 0 10.5 7.5" fill="none"><path d="M1.2 6.2 L5.25 1.8 L9.3 6.2" stroke="#fff" stroke-width="1.9" stroke-linecap="round" stroke-linejoin="round"/></svg>
<div class="abs" style="left:924.6px;top:962px;width:30.6px;height:24.2px;background:#22ea8b;border-radius:5.500px"></div>
<svg class="abs" style="left:932px;top:966px;" width="16" height="17" viewBox="0 0 16 17" fill="none"><path d="M8 14.600 V4 M3.600 8 L8 3.400 L12.400 8" stroke="#000" stroke-width="2.500" stroke-linecap="round" stroke-linejoin="round"/></svg>
<div class="t" style="left:899.40px;top:993.36px;font:normal bold 15.4px/20px 'Liberation Sans',sans-serif;color:#fff;transform:scaleX(0.8888);transform-origin:0 0;-webkit-text-stroke:0.2px #000">Поделиться</div>
<svg class="abs" style="left:1100.5px;top:958.5px;" width="32" height="32" viewBox="0 0 32 32" fill="none"><circle cx="16" cy="15.400" r="14.200" stroke="#fff" stroke-width="1.900"/><circle cx="16" cy="9.400" r="1.500" fill="#fff"/><path d="M13.600 13.400 H16.400 V21.600 M13 21.800 H19.600" stroke="#fff" stroke-width="1.800" stroke-linecap="round" stroke-linejoin="round"/></svg>
<div class="t" style="left:1012.50px;top:993.36px;font:normal bold 15.4px/20px 'Liberation Sans',sans-serif;color:#fff;transform:scaleX(0.9459);transform-origin:0 0;-webkit-text-stroke:0.2px #000">Информация о конференции</div>
<svg class="abs" style="left:1273.5px;top:960px;" width="30" height="29" viewBox="0 0 30 29" fill="none"><path d="M2.200 11 V7.600 C2.200 4.400 4 2.600 7.200 2.600 H12.600" stroke="#fff" stroke-width="1.800" stroke-linecap="round"/><circle cx="21.600" cy="6.800" r="4.600" stroke="#fff" stroke-width="1.700"/><circle cx="6.800" cy="21.200" r="4.600" stroke="#fff" stroke-width="1.700"/><path d="M26.600 16 V20.200 C26.600 23.600 24.800 25.600 21.400 25.600 H16.600" stroke="#fff" stroke-width="1.800" stroke-linecap="round"/></svg>
<div class="t" style="left:1242.30px;top:993.36px;font:normal bold 15.4px/20px 'Liberation Sans',sans-serif;color:#fff;transform:scaleX(0.9540);transform-origin:0 0;-webkit-text-stroke:0.2px #000">Приложения</div>
<svg class="abs" style="left:1378px;top:958.5px;" width="32" height="32" viewBox="0 0 32 32" fill="none"><circle cx="16" cy="15.400" r="14.200" stroke="#fff" stroke-width="1.900"/><circle cx="16" cy="15.400" r="5.400" fill="#fff"/></svg>
<div class="t" style="left:1369.00px;top:993.36px;font:normal bold 15.4px/20px 'Liberation Sans',sans-serif;color:#fff;transform:scaleX(0.8912);transform-origin:0 0;-webkit-text-stroke:0.2px #000">Запись</div>
<svg class="abs" style="left:1493px;top:958.5px;" width="32" height="32" viewBox="0 0 32 32" fill="none"><circle cx="16" cy="15.400" r="14.200" stroke="#fff" stroke-width="1.900"/><circle cx="9.600" cy="15.400" r="1.500" fill="#fff"/><circle cx="16" cy="15.400" r="1.500" fill="#fff"/><circle cx="22.400" cy="15.400" r="1.500" fill="#fff"/></svg>
<div class="t" style="left:1453.40px;top:993.36px;font:normal bold 15.4px/20px 'Liberation Sans',sans-serif;color:#fff;transform:scaleX(0.9141);transform-origin:0 0;-webkit-text-stroke:0.2px #000">Дополнительно</div>
<svg class="abs" style="left:1843px;top:957px;" width="34" height="34" viewBox="0 0 34 34" fill="none"><path d="M12.800 2.800 H31 V26.300" stroke="#ea2460" stroke-width="1.700"/><path d="M22.300 9.400 L30.200 3.600 V26.200 L22.300 30.800Z" stroke="#ea2460" stroke-width="1.800" stroke-linejoin="round"/><circle cx="12.100" cy="9.300" r="3.500" stroke="#fff" stroke-width="1.700" fill="#000"/><path d="M9 13.600 L4.600 16.200 C3 17.200 2.600 18.400 3.200 19.800 L4 21.400 C4.600 22.400 6 22.400 6.600 21.400 L6.800 19.600 L8.600 18.600 L7.800 22.400 L3.200 28.800 C2.400 30 3 31.400 4.400 31.800 C5.400 32 6.200 31.600 6.800 30.800 L11.600 24.600 L12.600 30.400 C12.900 31.600 14 32.200 15.200 31.900 C16.300 31.600 16.800 30.600 16.600 29.400 L15.400 22.600 L15.800 19.200 L17.200 20.600 C18 21.400 19.200 21.300 19.800 20.400 C20.400 19.600 20.200 18.800 19.600 18 L15.600 13.600 C14 12.200 11 12.400 9 13.600Z" stroke="#fff" stroke-width="1.600" stroke-linejoin="round" fill="#000"/></svg>
<div class="t" style="left:1838.00px;top:993.36px;font:normal bold 15.4px/20px 'Liberation Sans',sans-serif;color:#fff;transform:scaleX(0.8360);transform-origin:0 0;-webkit-text-stroke:0.2px #000">Выйти</div>
</body>
</html>
